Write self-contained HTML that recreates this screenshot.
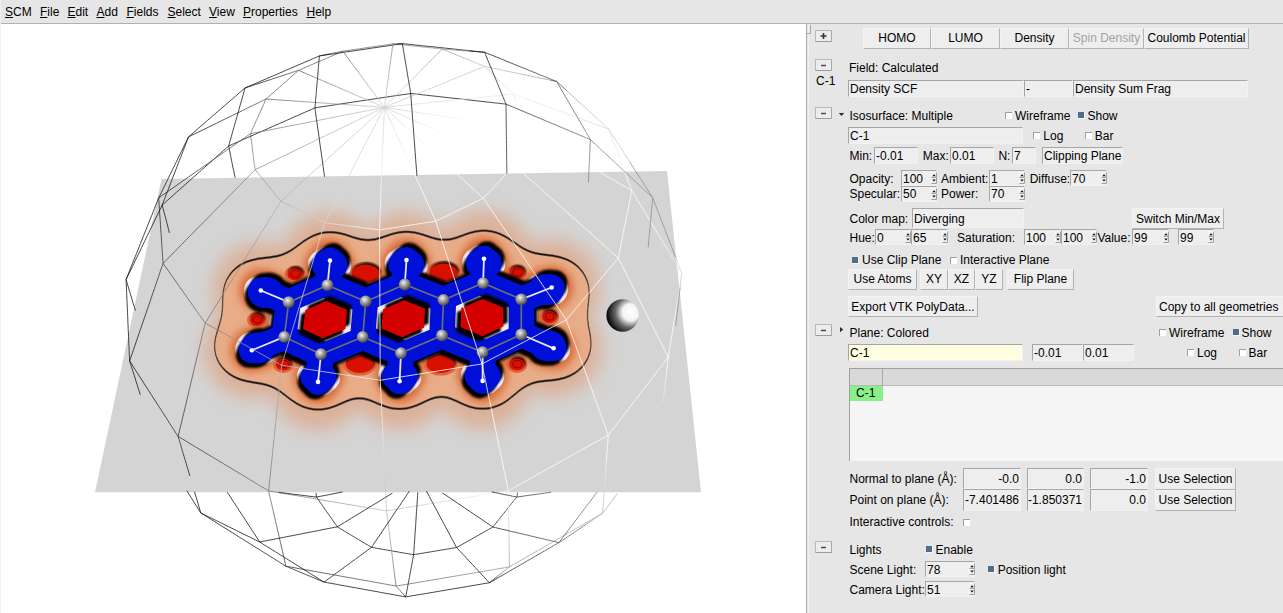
<!DOCTYPE html>
<html><head><meta charset="utf-8"><style>
*{margin:0;padding:0}
body{width:1283px;height:613px;overflow:hidden;background:#fff;position:relative;font-family:"Liberation Sans",sans-serif;font-size:12px;color:#000}
.t{position:absolute;font-size:12px;line-height:14px;white-space:pre}
.b{position:absolute;box-sizing:border-box;background:#eeeeee;border-top:1px solid #f3f3f3;border-left:1px solid #f3f3f3;border-bottom:1px solid #b2b2b2;border-right:1px solid #b2b2b2}
.e{position:absolute;box-sizing:border-box;background:#eeeeee;border-top:1px solid #a6a6a6;border-left:1px solid #a6a6a6;border-bottom:1px solid #f2f2f2;border-right:1px solid #f2f2f2}
.cb{position:absolute;width:7px;height:7px;box-sizing:border-box;background:#fff;border-top:1px solid #a0a0a0;border-left:1px solid #a0a0a0}
.cbk{position:absolute;width:7px;height:7px;box-sizing:border-box;background:#4f6d8c;border-right:1px solid #f6f6f6;border-bottom:1px solid #f6f6f6}
.mb{position:absolute;width:17px;height:12px;box-sizing:border-box;background:#ececec;border:1px solid #b8b8b8;border-bottom-color:#9c9c9c;border-right-color:#a8a8a8;border-radius:1px}
.sp{position:absolute;width:6px;height:11px}
.ar{position:absolute}
#menu{position:absolute;left:0;top:0;width:1283px;height:23px;background:#e6e6e6;border-bottom:1px solid #b0b0b0}
#menu span{position:absolute;top:5px;line-height:14px;font-size:12px}
#menu u{text-decoration:underline;text-underline-offset:1px;text-decoration-thickness:1px}
#panel{position:absolute;left:806px;top:24px;width:477px;height:589px;background:#e6e6e6}
</style></head><body>
<div id="menu"><span style="left:5.0px"><u>S</u>CM</span><span style="left:40.0px"><u>F</u>ile</span><span style="left:67.5px"><u>E</u>dit</span><span style="left:96.5px"><u>A</u>dd</span><span style="left:126.5px"><u>F</u>ields</span><span style="left:167.5px"><u>S</u>elect</span><span style="left:209.0px"><u>V</u>iew</span><span style="left:243.0px"><u>P</u>roperties</span><span style="left:306.5px"><u>H</u>elp</span></div>
<svg style="position:absolute;left:0;top:24px" width="806" height="589" viewBox="0 24 806 589">
<polygon points="161.5,179 667,171 701,492.3 95,492.3" fill="#d4d4d4"/>
<defs><filter id="hb" x="-30%" y="-50%" width="160%" height="200%"><feGaussianBlur stdDeviation="9"/></filter><filter id="mb" x="-30%" y="-50%" width="160%" height="200%"><feGaussianBlur stdDeviation="17.0"/><feComponentTransfer><feFuncA type="linear" slope="30" intercept="-12"/></feComponentTransfer></filter><filter id="b4" x="-20%" y="-20%" width="140%" height="140%"><feGaussianBlur stdDeviation="4"/></filter><filter id="b1" x="-10%" y="-10%" width="120%" height="120%"><feGaussianBlur stdDeviation="1.3"/></filter><filter id="b2" x="-10%" y="-10%" width="120%" height="120%"><feGaussianBlur stdDeviation="0.6"/></filter><radialGradient id="cg" cx="0.4" cy="0.35" r="0.7"><stop offset="0" stop-color="#f2f2f2"/><stop offset="0.45" stop-color="#9a9a9a"/><stop offset="1" stop-color="#3a3a3a"/></radialGradient><radialGradient id="bg" cx="0.75" cy="0.4" r="0.85"><stop offset="0" stop-color="#ffffff"/><stop offset="0.3" stop-color="#f4f4f4"/><stop offset="0.55" stop-color="#6a6a6a"/><stop offset="0.85" stop-color="#0c0c0c"/><stop offset="1" stop-color="#000"/></radialGradient></defs>
<g filter="url(#hb)"><path d="M288.7,302.2L327.5,285.2M327.5,285.2L365.7,301.4M365.7,301.4L362.7,336.9M362.7,336.9L321.0,354.2M321.0,354.2L284.3,336.9M284.3,336.9L288.7,302.2M365.7,301.4L404.8,284.5M404.8,284.5L443.5,299.9M443.5,299.9L442.0,335.4M442.0,335.4L401.0,353.1M401.0,353.1L362.7,336.9M443.5,299.9L483.1,283.1M483.1,283.1L521.3,299.3M521.3,299.3L521.3,334.5M521.3,334.5L482.6,352.2M482.6,352.2L442.0,335.4" stroke="#dcb098" stroke-width="96.0" stroke-linecap="round" stroke-linejoin="round" fill="none"/><path d="M327.5,285.2L330.0,260.5M404.8,284.5L406.5,260.1M483.1,283.1L484.0,258.8M288.7,302.2L260.8,290.5M284.3,336.9L251.8,350.3M321.0,354.2L318.0,381.9M401.0,353.1L399.6,381.2M482.6,352.2L482.6,380.9M521.3,299.3L551.6,287.5M521.3,334.5L553.6,348.3" stroke="#dcb098" stroke-width="96.0" stroke-linecap="round" fill="none"/><ellipse cx="329.2" cy="267.9" rx="52.0" ry="44.7" fill="#dcb098"/><ellipse cx="406.0" cy="267.4" rx="52.0" ry="44.7" fill="#dcb098"/><ellipse cx="483.7" cy="266.1" rx="52.0" ry="44.7" fill="#dcb098"/><ellipse cx="269.2" cy="294.0" rx="52.0" ry="44.7" fill="#dcb098"/><ellipse cx="261.6" cy="346.3" rx="52.0" ry="44.7" fill="#dcb098"/><ellipse cx="318.9" cy="373.6" rx="52.0" ry="44.7" fill="#dcb098"/><ellipse cx="400.0" cy="372.8" rx="52.0" ry="44.7" fill="#dcb098"/><ellipse cx="482.6" cy="372.3" rx="52.0" ry="44.7" fill="#dcb098"/><ellipse cx="542.5" cy="291.0" rx="52.0" ry="44.7" fill="#dcb098"/><ellipse cx="543.9" cy="344.2" rx="52.0" ry="44.7" fill="#dcb098"/></g>
<g transform="translate(0.0,-2.0) translate(403,318) scale(1,0.900) translate(-403,-318)"><g filter="url(#mb)"><path d="M288.7,302.2L327.5,285.2M327.5,285.2L365.7,301.4M365.7,301.4L362.7,336.9M362.7,336.9L321.0,354.2M321.0,354.2L284.3,336.9M284.3,336.9L288.7,302.2M365.7,301.4L404.8,284.5M404.8,284.5L443.5,299.9M443.5,299.9L442.0,335.4M442.0,335.4L401.0,353.1M401.0,353.1L362.7,336.9M443.5,299.9L483.1,283.1M483.1,283.1L521.3,299.3M521.3,299.3L521.3,334.5M521.3,334.5L482.6,352.2M482.6,352.2L442.0,335.4" stroke="#141414" stroke-width="74.0" stroke-linecap="round" stroke-linejoin="round" fill="none"/><path d="M327.5,285.2L330.0,260.5M404.8,284.5L406.5,260.1M483.1,283.1L484.0,258.8M288.7,302.2L260.8,290.5M284.3,336.9L251.8,350.3M321.0,354.2L318.0,381.9M401.0,353.1L399.6,381.2M482.6,352.2L482.6,380.9M521.3,299.3L551.6,287.5M521.3,334.5L553.6,348.3" stroke="#141414" stroke-width="74.0" stroke-linecap="round" fill="none"/><ellipse cx="329.2" cy="267.9" rx="40.0" ry="34.4" fill="#141414"/><ellipse cx="406.0" cy="267.4" rx="40.0" ry="34.4" fill="#141414"/><ellipse cx="483.7" cy="266.1" rx="40.0" ry="34.4" fill="#141414"/><ellipse cx="269.2" cy="294.0" rx="40.0" ry="34.4" fill="#141414"/><ellipse cx="261.6" cy="346.3" rx="40.0" ry="34.4" fill="#141414"/><ellipse cx="318.9" cy="373.6" rx="40.0" ry="34.4" fill="#141414"/><ellipse cx="400.0" cy="372.8" rx="40.0" ry="34.4" fill="#141414"/><ellipse cx="482.6" cy="372.3" rx="40.0" ry="34.4" fill="#141414"/><ellipse cx="542.5" cy="291.0" rx="40.0" ry="34.4" fill="#141414"/><ellipse cx="543.9" cy="344.2" rx="40.0" ry="34.4" fill="#141414"/></g></g><g transform="translate(0.0,2.0) translate(403,318) scale(1,0.900) translate(-403,-318)"><g filter="url(#mb)"><path d="M288.7,302.2L327.5,285.2M327.5,285.2L365.7,301.4M365.7,301.4L362.7,336.9M362.7,336.9L321.0,354.2M321.0,354.2L284.3,336.9M284.3,336.9L288.7,302.2M365.7,301.4L404.8,284.5M404.8,284.5L443.5,299.9M443.5,299.9L442.0,335.4M442.0,335.4L401.0,353.1M401.0,353.1L362.7,336.9M443.5,299.9L483.1,283.1M483.1,283.1L521.3,299.3M521.3,299.3L521.3,334.5M521.3,334.5L482.6,352.2M482.6,352.2L442.0,335.4" stroke="#141414" stroke-width="74.0" stroke-linecap="round" stroke-linejoin="round" fill="none"/><path d="M327.5,285.2L330.0,260.5M404.8,284.5L406.5,260.1M483.1,283.1L484.0,258.8M288.7,302.2L260.8,290.5M284.3,336.9L251.8,350.3M321.0,354.2L318.0,381.9M401.0,353.1L399.6,381.2M482.6,352.2L482.6,380.9M521.3,299.3L551.6,287.5M521.3,334.5L553.6,348.3" stroke="#141414" stroke-width="74.0" stroke-linecap="round" fill="none"/><ellipse cx="329.2" cy="267.9" rx="40.0" ry="34.4" fill="#141414"/><ellipse cx="406.0" cy="267.4" rx="40.0" ry="34.4" fill="#141414"/><ellipse cx="483.7" cy="266.1" rx="40.0" ry="34.4" fill="#141414"/><ellipse cx="269.2" cy="294.0" rx="40.0" ry="34.4" fill="#141414"/><ellipse cx="261.6" cy="346.3" rx="40.0" ry="34.4" fill="#141414"/><ellipse cx="318.9" cy="373.6" rx="40.0" ry="34.4" fill="#141414"/><ellipse cx="400.0" cy="372.8" rx="40.0" ry="34.4" fill="#141414"/><ellipse cx="482.6" cy="372.3" rx="40.0" ry="34.4" fill="#141414"/><ellipse cx="542.5" cy="291.0" rx="40.0" ry="34.4" fill="#141414"/><ellipse cx="543.9" cy="344.2" rx="40.0" ry="34.4" fill="#141414"/></g></g><g transform="translate(-0.8,0.0) translate(403,318) scale(1,0.900) translate(-403,-318)"><g filter="url(#mb)"><path d="M288.7,302.2L327.5,285.2M327.5,285.2L365.7,301.4M365.7,301.4L362.7,336.9M362.7,336.9L321.0,354.2M321.0,354.2L284.3,336.9M284.3,336.9L288.7,302.2M365.7,301.4L404.8,284.5M404.8,284.5L443.5,299.9M443.5,299.9L442.0,335.4M442.0,335.4L401.0,353.1M401.0,353.1L362.7,336.9M443.5,299.9L483.1,283.1M483.1,283.1L521.3,299.3M521.3,299.3L521.3,334.5M521.3,334.5L482.6,352.2M482.6,352.2L442.0,335.4" stroke="#141414" stroke-width="74.0" stroke-linecap="round" stroke-linejoin="round" fill="none"/><path d="M327.5,285.2L330.0,260.5M404.8,284.5L406.5,260.1M483.1,283.1L484.0,258.8M288.7,302.2L260.8,290.5M284.3,336.9L251.8,350.3M321.0,354.2L318.0,381.9M401.0,353.1L399.6,381.2M482.6,352.2L482.6,380.9M521.3,299.3L551.6,287.5M521.3,334.5L553.6,348.3" stroke="#141414" stroke-width="74.0" stroke-linecap="round" fill="none"/><ellipse cx="329.2" cy="267.9" rx="40.0" ry="34.4" fill="#141414"/><ellipse cx="406.0" cy="267.4" rx="40.0" ry="34.4" fill="#141414"/><ellipse cx="483.7" cy="266.1" rx="40.0" ry="34.4" fill="#141414"/><ellipse cx="269.2" cy="294.0" rx="40.0" ry="34.4" fill="#141414"/><ellipse cx="261.6" cy="346.3" rx="40.0" ry="34.4" fill="#141414"/><ellipse cx="318.9" cy="373.6" rx="40.0" ry="34.4" fill="#141414"/><ellipse cx="400.0" cy="372.8" rx="40.0" ry="34.4" fill="#141414"/><ellipse cx="482.6" cy="372.3" rx="40.0" ry="34.4" fill="#141414"/><ellipse cx="542.5" cy="291.0" rx="40.0" ry="34.4" fill="#141414"/><ellipse cx="543.9" cy="344.2" rx="40.0" ry="34.4" fill="#141414"/></g></g><g transform="translate(0.8,0.0) translate(403,318) scale(1,0.900) translate(-403,-318)"><g filter="url(#mb)"><path d="M288.7,302.2L327.5,285.2M327.5,285.2L365.7,301.4M365.7,301.4L362.7,336.9M362.7,336.9L321.0,354.2M321.0,354.2L284.3,336.9M284.3,336.9L288.7,302.2M365.7,301.4L404.8,284.5M404.8,284.5L443.5,299.9M443.5,299.9L442.0,335.4M442.0,335.4L401.0,353.1M401.0,353.1L362.7,336.9M443.5,299.9L483.1,283.1M483.1,283.1L521.3,299.3M521.3,299.3L521.3,334.5M521.3,334.5L482.6,352.2M482.6,352.2L442.0,335.4" stroke="#141414" stroke-width="74.0" stroke-linecap="round" stroke-linejoin="round" fill="none"/><path d="M327.5,285.2L330.0,260.5M404.8,284.5L406.5,260.1M483.1,283.1L484.0,258.8M288.7,302.2L260.8,290.5M284.3,336.9L251.8,350.3M321.0,354.2L318.0,381.9M401.0,353.1L399.6,381.2M482.6,352.2L482.6,380.9M521.3,299.3L551.6,287.5M521.3,334.5L553.6,348.3" stroke="#141414" stroke-width="74.0" stroke-linecap="round" fill="none"/><ellipse cx="329.2" cy="267.9" rx="40.0" ry="34.4" fill="#141414"/><ellipse cx="406.0" cy="267.4" rx="40.0" ry="34.4" fill="#141414"/><ellipse cx="483.7" cy="266.1" rx="40.0" ry="34.4" fill="#141414"/><ellipse cx="269.2" cy="294.0" rx="40.0" ry="34.4" fill="#141414"/><ellipse cx="261.6" cy="346.3" rx="40.0" ry="34.4" fill="#141414"/><ellipse cx="318.9" cy="373.6" rx="40.0" ry="34.4" fill="#141414"/><ellipse cx="400.0" cy="372.8" rx="40.0" ry="34.4" fill="#141414"/><ellipse cx="482.6" cy="372.3" rx="40.0" ry="34.4" fill="#141414"/><ellipse cx="542.5" cy="291.0" rx="40.0" ry="34.4" fill="#141414"/><ellipse cx="543.9" cy="344.2" rx="40.0" ry="34.4" fill="#141414"/></g></g>
<g transform="translate(0.0,0.0) translate(403,318) scale(1,0.900) translate(-403,-318)"><g filter="url(#mb)"><path d="M288.7,302.2L327.5,285.2M327.5,285.2L365.7,301.4M365.7,301.4L362.7,336.9M362.7,336.9L321.0,354.2M321.0,354.2L284.3,336.9M284.3,336.9L288.7,302.2M365.7,301.4L404.8,284.5M404.8,284.5L443.5,299.9M443.5,299.9L442.0,335.4M442.0,335.4L401.0,353.1M401.0,353.1L362.7,336.9M443.5,299.9L483.1,283.1M483.1,283.1L521.3,299.3M521.3,299.3L521.3,334.5M521.3,334.5L482.6,352.2M482.6,352.2L442.0,335.4" stroke="#e8ac88" stroke-width="74.0" stroke-linecap="round" stroke-linejoin="round" fill="none"/><path d="M327.5,285.2L330.0,260.5M404.8,284.5L406.5,260.1M483.1,283.1L484.0,258.8M288.7,302.2L260.8,290.5M284.3,336.9L251.8,350.3M321.0,354.2L318.0,381.9M401.0,353.1L399.6,381.2M482.6,352.2L482.6,380.9M521.3,299.3L551.6,287.5M521.3,334.5L553.6,348.3" stroke="#e8ac88" stroke-width="74.0" stroke-linecap="round" fill="none"/><ellipse cx="329.2" cy="267.9" rx="40.0" ry="34.4" fill="#e8ac88"/><ellipse cx="406.0" cy="267.4" rx="40.0" ry="34.4" fill="#e8ac88"/><ellipse cx="483.7" cy="266.1" rx="40.0" ry="34.4" fill="#e8ac88"/><ellipse cx="269.2" cy="294.0" rx="40.0" ry="34.4" fill="#e8ac88"/><ellipse cx="261.6" cy="346.3" rx="40.0" ry="34.4" fill="#e8ac88"/><ellipse cx="318.9" cy="373.6" rx="40.0" ry="34.4" fill="#e8ac88"/><ellipse cx="400.0" cy="372.8" rx="40.0" ry="34.4" fill="#e8ac88"/><ellipse cx="482.6" cy="372.3" rx="40.0" ry="34.4" fill="#e8ac88"/><ellipse cx="542.5" cy="291.0" rx="40.0" ry="34.4" fill="#e8ac88"/><ellipse cx="543.9" cy="344.2" rx="40.0" ry="34.4" fill="#e8ac88"/></g></g>
<g filter="url(#b4)"><path d="M288.7,302.2L327.5,285.2M327.5,285.2L365.7,301.4M365.7,301.4L362.7,336.9M362.7,336.9L321.0,354.2M321.0,354.2L284.3,336.9M284.3,336.9L288.7,302.2M365.7,301.4L404.8,284.5M404.8,284.5L443.5,299.9M443.5,299.9L442.0,335.4M442.0,335.4L401.0,353.1M401.0,353.1L362.7,336.9M443.5,299.9L483.1,283.1M483.1,283.1L521.3,299.3M521.3,299.3L521.3,334.5M521.3,334.5L482.6,352.2M482.6,352.2L442.0,335.4" stroke="#dc7c48" stroke-width="42.0" stroke-linecap="round" stroke-linejoin="round" fill="none"/><path d="M327.5,285.2L330.0,260.5M404.8,284.5L406.5,260.1M483.1,283.1L484.0,258.8M288.7,302.2L260.8,290.5M284.3,336.9L251.8,350.3M321.0,354.2L318.0,381.9M401.0,353.1L399.6,381.2M482.6,352.2L482.6,380.9M521.3,299.3L551.6,287.5M521.3,334.5L553.6,348.3" stroke="#dc7c48" stroke-width="42.0" stroke-linecap="round" fill="none"/><ellipse cx="329.4" cy="266.7" rx="25.0" ry="21.5" fill="#dc7c48"/><ellipse cx="406.1" cy="266.2" rx="25.0" ry="21.5" fill="#dc7c48"/><ellipse cx="483.8" cy="264.9" rx="25.0" ry="21.5" fill="#dc7c48"/><ellipse cx="267.8" cy="293.4" rx="25.0" ry="21.5" fill="#dc7c48"/><ellipse cx="259.9" cy="346.9" rx="25.0" ry="21.5" fill="#dc7c48"/><ellipse cx="318.8" cy="375.0" rx="25.0" ry="21.5" fill="#dc7c48"/><ellipse cx="400.0" cy="374.2" rx="25.0" ry="21.5" fill="#dc7c48"/><ellipse cx="482.6" cy="373.7" rx="25.0" ry="21.5" fill="#dc7c48"/><ellipse cx="544.0" cy="290.4" rx="25.0" ry="21.5" fill="#dc7c48"/><ellipse cx="545.5" cy="344.9" rx="25.0" ry="21.5" fill="#dc7c48"/></g>
<g filter="url(#b4)"><path d="M288.7,302.2L327.5,285.2M327.5,285.2L365.7,301.4M365.7,301.4L362.7,336.9M362.7,336.9L321.0,354.2M321.0,354.2L284.3,336.9M284.3,336.9L288.7,302.2M365.7,301.4L404.8,284.5M404.8,284.5L443.5,299.9M443.5,299.9L442.0,335.4M442.0,335.4L401.0,353.1M401.0,353.1L362.7,336.9M443.5,299.9L483.1,283.1M483.1,283.1L521.3,299.3M521.3,299.3L521.3,334.5M521.3,334.5L482.6,352.2M482.6,352.2L442.0,335.4" stroke="#da6a38" stroke-width="38.0" stroke-linecap="round" stroke-linejoin="round" fill="none"/><path d="M327.5,285.2L330.0,260.5M404.8,284.5L406.5,260.1M483.1,283.1L484.0,258.8M288.7,302.2L260.8,290.5M284.3,336.9L251.8,350.3M321.0,354.2L318.0,381.9M401.0,353.1L399.6,381.2M482.6,352.2L482.6,380.9M521.3,299.3L551.6,287.5M521.3,334.5L553.6,348.3" stroke="#da6a38" stroke-width="38.0" stroke-linecap="round" fill="none"/><ellipse cx="329.6" cy="264.9" rx="23.0" ry="19.8" fill="#da6a38"/><ellipse cx="406.2" cy="264.5" rx="23.0" ry="19.8" fill="#da6a38"/><ellipse cx="483.8" cy="263.2" rx="23.0" ry="19.8" fill="#da6a38"/><ellipse cx="265.8" cy="292.6" rx="23.0" ry="19.8" fill="#da6a38"/><ellipse cx="257.7" cy="347.9" rx="23.0" ry="19.8" fill="#da6a38"/><ellipse cx="318.5" cy="376.9" rx="23.0" ry="19.8" fill="#da6a38"/><ellipse cx="399.9" cy="376.1" rx="23.0" ry="19.8" fill="#da6a38"/><ellipse cx="482.6" cy="375.7" rx="23.0" ry="19.8" fill="#da6a38"/><ellipse cx="546.1" cy="289.6" rx="23.0" ry="19.8" fill="#da6a38"/><ellipse cx="547.8" cy="345.8" rx="23.0" ry="19.8" fill="#da6a38"/></g>
<ellipse cx="365.6" cy="273.5" rx="17.0" ry="11.5" fill="#e0643a" filter="url(#b2)"/>
<ellipse cx="366.6" cy="271.5" rx="14.0" ry="9.0" fill="#111" filter="url(#b1)"/>
<ellipse cx="365.6" cy="273.5" rx="14.0" ry="9.0" fill="#d81000"/>
<ellipse cx="443.5" cy="272.5" rx="17.0" ry="11.5" fill="#e0643a" filter="url(#b2)"/>
<ellipse cx="444.5" cy="270.5" rx="14.0" ry="9.0" fill="#111" filter="url(#b1)"/>
<ellipse cx="443.5" cy="272.5" rx="14.0" ry="9.0" fill="#d81000"/>
<ellipse cx="359.8" cy="364.0" rx="17.0" ry="11.5" fill="#e0643a" filter="url(#b2)"/>
<ellipse cx="360.8" cy="362.0" rx="14.0" ry="9.0" fill="#111" filter="url(#b1)"/>
<ellipse cx="359.8" cy="364.0" rx="14.0" ry="9.0" fill="#d81000"/>
<ellipse cx="440.6" cy="364.0" rx="17.0" ry="11.5" fill="#e0643a" filter="url(#b2)"/>
<ellipse cx="441.6" cy="362.0" rx="14.0" ry="9.0" fill="#111" filter="url(#b1)"/>
<ellipse cx="440.6" cy="364.0" rx="14.0" ry="9.0" fill="#d81000"/>
<ellipse cx="295.0" cy="274.3" rx="10.5" ry="8.5" fill="#e0643a" filter="url(#b2)"/>
<ellipse cx="296.0" cy="272.3" rx="7.5" ry="6.0" fill="#111" filter="url(#b1)"/>
<ellipse cx="295.0" cy="274.3" rx="7.5" ry="6.0" fill="#d81000"/>
<ellipse cx="295.5" cy="273.8" rx="4.5" ry="3.6" fill="none" stroke="#600" stroke-width="1" opacity="0.7"/>
<ellipse cx="257.0" cy="319.9" rx="10.0" ry="8.5" fill="#e0643a" filter="url(#b2)"/>
<ellipse cx="258.0" cy="317.9" rx="7.0" ry="6.0" fill="#111" filter="url(#b1)"/>
<ellipse cx="257.0" cy="319.9" rx="7.0" ry="6.0" fill="#d81000"/>
<ellipse cx="257.5" cy="319.4" rx="4.2" ry="3.6" fill="none" stroke="#600" stroke-width="1" opacity="0.7"/>
<ellipse cx="283.4" cy="364.5" rx="10.5" ry="8.5" fill="#e0643a" filter="url(#b2)"/>
<ellipse cx="284.4" cy="362.5" rx="7.5" ry="6.0" fill="#111" filter="url(#b1)"/>
<ellipse cx="283.4" cy="364.5" rx="7.5" ry="6.0" fill="#d81000"/>
<ellipse cx="283.9" cy="364.0" rx="4.5" ry="3.6" fill="none" stroke="#600" stroke-width="1" opacity="0.7"/>
<ellipse cx="516.9" cy="272.9" rx="10.5" ry="8.5" fill="#e0643a" filter="url(#b2)"/>
<ellipse cx="517.9" cy="270.9" rx="7.5" ry="6.0" fill="#111" filter="url(#b1)"/>
<ellipse cx="516.9" cy="272.9" rx="7.5" ry="6.0" fill="#d81000"/>
<ellipse cx="517.4" cy="272.4" rx="4.5" ry="3.6" fill="none" stroke="#600" stroke-width="1" opacity="0.7"/>
<ellipse cx="549.2" cy="316.9" rx="10.0" ry="8.5" fill="#e0643a" filter="url(#b2)"/>
<ellipse cx="550.2" cy="314.9" rx="7.0" ry="6.0" fill="#111" filter="url(#b1)"/>
<ellipse cx="549.2" cy="316.9" rx="7.0" ry="6.0" fill="#d81000"/>
<ellipse cx="549.7" cy="316.4" rx="4.2" ry="3.6" fill="none" stroke="#600" stroke-width="1" opacity="0.7"/>
<ellipse cx="516.9" cy="364.5" rx="10.5" ry="8.5" fill="#e0643a" filter="url(#b2)"/>
<ellipse cx="517.9" cy="362.5" rx="7.5" ry="6.0" fill="#111" filter="url(#b1)"/>
<ellipse cx="516.9" cy="364.5" rx="7.5" ry="6.0" fill="#d81000"/>
<ellipse cx="517.4" cy="364.0" rx="4.5" ry="3.6" fill="none" stroke="#600" stroke-width="1" opacity="0.7"/>
<g filter="url(#b2)"><path d="M285.2,301.2L324.0,284.2M324.0,284.2L362.2,300.4M362.2,300.4L359.2,335.9M359.2,335.9L317.5,353.2M317.5,353.2L280.8,335.9M280.8,335.9L285.2,301.2M362.2,300.4L401.3,283.5M401.3,283.5L440.0,298.9M440.0,298.9L438.5,334.4M438.5,334.4L397.5,352.1M397.5,352.1L359.2,335.9M440.0,298.9L479.6,282.1M479.6,282.1L517.8,298.3M517.8,298.3L517.8,333.5M517.8,333.5L479.1,351.2M479.1,351.2L438.5,334.4" stroke="#eee8fa" stroke-width="26.0" stroke-linecap="round" stroke-linejoin="round" fill="none"/><path d="M324.0,284.2L326.5,259.5M401.3,283.5L403.0,259.1M479.6,282.1L480.5,257.8M285.2,301.2L257.3,289.5M280.8,335.9L248.3,349.3M317.5,353.2L314.5,380.9M397.5,352.1L396.1,380.2M479.1,351.2L479.1,379.9M517.8,298.3L548.1,286.5M517.8,333.5L550.1,347.3" stroke="#eee8fa" stroke-width="26.0" stroke-linecap="round" fill="none"/><ellipse cx="326.1" cy="263.9" rx="18.0" ry="15.5" fill="#eee8fa"/><ellipse cx="402.7" cy="263.5" rx="18.0" ry="15.5" fill="#eee8fa"/><ellipse cx="480.3" cy="262.2" rx="18.0" ry="15.5" fill="#eee8fa"/><ellipse cx="262.3" cy="291.6" rx="18.0" ry="15.5" fill="#eee8fa"/><ellipse cx="254.2" cy="346.9" rx="18.0" ry="15.5" fill="#eee8fa"/><ellipse cx="315.0" cy="375.9" rx="18.0" ry="15.5" fill="#eee8fa"/><ellipse cx="396.4" cy="375.1" rx="18.0" ry="15.5" fill="#eee8fa"/><ellipse cx="479.1" cy="374.7" rx="18.0" ry="15.5" fill="#eee8fa"/><ellipse cx="542.6" cy="288.6" rx="18.0" ry="15.5" fill="#eee8fa"/><ellipse cx="544.3" cy="344.8" rx="18.0" ry="15.5" fill="#eee8fa"/><path d="M292.2,303.2L331.0,286.2M331.0,286.2L369.2,302.4M369.2,302.4L366.2,337.9M366.2,337.9L324.5,355.2M324.5,355.2L287.8,337.9M287.8,337.9L292.2,303.2M369.2,302.4L408.3,285.5M408.3,285.5L447.0,300.9M447.0,300.9L445.5,336.4M445.5,336.4L404.5,354.1M404.5,354.1L366.2,337.9M447.0,300.9L486.6,284.1M486.6,284.1L524.8,300.3M524.8,300.3L524.8,335.5M524.8,335.5L486.1,353.2M486.1,353.2L445.5,336.4" stroke="#eee8fa" stroke-width="26.0" stroke-linecap="round" stroke-linejoin="round" fill="none"/><path d="M331.0,286.2L333.5,261.5M408.3,285.5L410.0,261.1M486.6,284.1L487.5,259.8M292.2,303.2L264.3,291.5M287.8,337.9L255.3,351.3M324.5,355.2L321.5,382.9M404.5,354.1L403.1,382.2M486.1,353.2L486.1,381.9M524.8,300.3L555.1,288.5M524.8,335.5L557.1,349.3" stroke="#eee8fa" stroke-width="26.0" stroke-linecap="round" fill="none"/><ellipse cx="333.1" cy="265.9" rx="18.0" ry="15.5" fill="#eee8fa"/><ellipse cx="409.7" cy="265.5" rx="18.0" ry="15.5" fill="#eee8fa"/><ellipse cx="487.3" cy="264.2" rx="18.0" ry="15.5" fill="#eee8fa"/><ellipse cx="269.3" cy="293.6" rx="18.0" ry="15.5" fill="#eee8fa"/><ellipse cx="261.2" cy="348.9" rx="18.0" ry="15.5" fill="#eee8fa"/><ellipse cx="322.0" cy="377.9" rx="18.0" ry="15.5" fill="#eee8fa"/><ellipse cx="403.4" cy="377.1" rx="18.0" ry="15.5" fill="#eee8fa"/><ellipse cx="486.1" cy="376.7" rx="18.0" ry="15.5" fill="#eee8fa"/><ellipse cx="549.6" cy="290.6" rx="18.0" ry="15.5" fill="#eee8fa"/><ellipse cx="551.3" cy="346.8" rx="18.0" ry="15.5" fill="#eee8fa"/></g>
<g filter="url(#b1)"><path d="M291.7,297.7L330.5,280.7M330.5,280.7L368.7,296.9M368.7,296.9L365.7,332.4M365.7,332.4L324.0,349.7M324.0,349.7L287.3,332.4M287.3,332.4L291.7,297.7M368.7,296.9L407.8,280.0M407.8,280.0L446.5,295.4M446.5,295.4L445.0,330.9M445.0,330.9L404.0,348.6M404.0,348.6L365.7,332.4M446.5,295.4L486.1,278.6M486.1,278.6L524.3,294.8M524.3,294.8L524.3,330.0M524.3,330.0L485.6,347.7M485.6,347.7L445.0,330.9" stroke="#000" stroke-width="26.0" stroke-linecap="round" stroke-linejoin="round" fill="none"/><path d="M330.5,280.7L333.0,256.0M407.8,280.0L409.5,255.6M486.1,278.6L487.0,254.3M291.7,297.7L263.8,286.0M287.3,332.4L254.8,345.8M324.0,349.7L321.0,377.4M404.0,348.6L402.6,376.7M485.6,347.7L485.6,376.4M524.3,294.8L554.6,283.0M524.3,330.0L556.6,343.8" stroke="#000" stroke-width="26.0" stroke-linecap="round" fill="none"/><ellipse cx="332.6" cy="260.4" rx="18.0" ry="15.5" fill="#000"/><ellipse cx="409.2" cy="260.0" rx="18.0" ry="15.5" fill="#000"/><ellipse cx="486.8" cy="258.7" rx="18.0" ry="15.5" fill="#000"/><ellipse cx="268.8" cy="288.1" rx="18.0" ry="15.5" fill="#000"/><ellipse cx="260.7" cy="343.4" rx="18.0" ry="15.5" fill="#000"/><ellipse cx="321.5" cy="372.4" rx="18.0" ry="15.5" fill="#000"/><ellipse cx="402.9" cy="371.6" rx="18.0" ry="15.5" fill="#000"/><ellipse cx="485.6" cy="371.2" rx="18.0" ry="15.5" fill="#000"/><ellipse cx="549.1" cy="285.1" rx="18.0" ry="15.5" fill="#000"/><ellipse cx="550.8" cy="341.3" rx="18.0" ry="15.5" fill="#000"/><path d="M285.7,306.7L324.5,289.7M324.5,289.7L362.7,305.9M362.7,305.9L359.7,341.4M359.7,341.4L318.0,358.7M318.0,358.7L281.3,341.4M281.3,341.4L285.7,306.7M362.7,305.9L401.8,289.0M401.8,289.0L440.5,304.4M440.5,304.4L439.0,339.9M439.0,339.9L398.0,357.6M398.0,357.6L359.7,341.4M440.5,304.4L480.1,287.6M480.1,287.6L518.3,303.8M518.3,303.8L518.3,339.0M518.3,339.0L479.6,356.7M479.6,356.7L439.0,339.9" stroke="#000" stroke-width="26.0" stroke-linecap="round" stroke-linejoin="round" fill="none"/><path d="M324.5,289.7L327.0,265.0M401.8,289.0L403.5,264.6M480.1,287.6L481.0,263.3M285.7,306.7L257.8,295.0M281.3,341.4L248.8,354.8M318.0,358.7L315.0,386.4M398.0,357.6L396.6,385.7M479.6,356.7L479.6,385.4M518.3,303.8L548.6,292.0M518.3,339.0L550.6,352.8" stroke="#000" stroke-width="26.0" stroke-linecap="round" fill="none"/><ellipse cx="326.6" cy="269.4" rx="18.0" ry="15.5" fill="#000"/><ellipse cx="403.2" cy="269.0" rx="18.0" ry="15.5" fill="#000"/><ellipse cx="480.8" cy="267.7" rx="18.0" ry="15.5" fill="#000"/><ellipse cx="262.8" cy="297.1" rx="18.0" ry="15.5" fill="#000"/><ellipse cx="254.7" cy="352.4" rx="18.0" ry="15.5" fill="#000"/><ellipse cx="315.5" cy="381.4" rx="18.0" ry="15.5" fill="#000"/><ellipse cx="396.9" cy="380.6" rx="18.0" ry="15.5" fill="#000"/><ellipse cx="479.6" cy="380.2" rx="18.0" ry="15.5" fill="#000"/><ellipse cx="543.1" cy="294.1" rx="18.0" ry="15.5" fill="#000"/><ellipse cx="544.8" cy="350.3" rx="18.0" ry="15.5" fill="#000"/></g>
<path d="M288.7,302.2L327.5,285.2M327.5,285.2L365.7,301.4M365.7,301.4L362.7,336.9M362.7,336.9L321.0,354.2M321.0,354.2L284.3,336.9M284.3,336.9L288.7,302.2M365.7,301.4L404.8,284.5M404.8,284.5L443.5,299.9M443.5,299.9L442.0,335.4M442.0,335.4L401.0,353.1M401.0,353.1L362.7,336.9M443.5,299.9L483.1,283.1M483.1,283.1L521.3,299.3M521.3,299.3L521.3,334.5M521.3,334.5L482.6,352.2M482.6,352.2L442.0,335.4" stroke="#0010d8" stroke-width="26.0" stroke-linecap="round" stroke-linejoin="round" fill="none"/><path d="M327.5,285.2L330.0,260.5M404.8,284.5L406.5,260.1M483.1,283.1L484.0,258.8M288.7,302.2L260.8,290.5M284.3,336.9L251.8,350.3M321.0,354.2L318.0,381.9M401.0,353.1L399.6,381.2M482.6,352.2L482.6,380.9M521.3,299.3L551.6,287.5M521.3,334.5L553.6,348.3" stroke="#0010d8" stroke-width="26.0" stroke-linecap="round" fill="none"/><ellipse cx="329.6" cy="264.9" rx="18.0" ry="15.5" fill="#0010d8"/><ellipse cx="406.2" cy="264.5" rx="18.0" ry="15.5" fill="#0010d8"/><ellipse cx="483.8" cy="263.2" rx="18.0" ry="15.5" fill="#0010d8"/><ellipse cx="265.8" cy="292.6" rx="18.0" ry="15.5" fill="#0010d8"/><ellipse cx="257.7" cy="347.9" rx="18.0" ry="15.5" fill="#0010d8"/><ellipse cx="318.5" cy="376.9" rx="18.0" ry="15.5" fill="#0010d8"/><ellipse cx="399.9" cy="376.1" rx="18.0" ry="15.5" fill="#0010d8"/><ellipse cx="482.6" cy="375.7" rx="18.0" ry="15.5" fill="#0010d8"/><ellipse cx="546.1" cy="289.6" rx="18.0" ry="15.5" fill="#0010d8"/><ellipse cx="547.8" cy="345.8" rx="18.0" ry="15.5" fill="#0010d8"/>
<g filter="url(#b2)"><path d="M300.2,308.1 L323.5,297.9 L346.4,307.6 L344.6,328.9 L319.6,339.3 L297.6,328.9Z" fill="#f2ecf6"/><path d="M377.7,307.3 L401.2,297.1 L424.4,306.4 L423.5,327.7 L398.9,338.3 L375.9,328.6Z" fill="#f2ecf6"/><path d="M456.0,305.9 L479.8,295.8 L502.7,305.5 L502.7,326.7 L479.5,337.3 L455.1,327.2Z" fill="#f2ecf6"/><path d="M306.2,310.1 L329.5,299.9 L352.4,309.6 L350.6,330.9 L325.6,341.3 L303.6,330.9Z" fill="#f2ecf6"/><path d="M383.7,309.3 L407.2,299.1 L430.4,308.4 L429.5,329.7 L404.9,340.3 L381.9,330.6Z" fill="#f2ecf6"/><path d="M462.0,307.9 L485.8,297.8 L508.7,307.5 L508.7,328.7 L485.5,339.3 L461.1,329.2Z" fill="#f2ecf6"/></g>
<g filter="url(#b1)"><path d="M308.2,305.3 L329.9,295.8 L351.3,304.8 L349.6,324.7 L326.3,334.4 L305.7,324.7Z" fill="#000"/><path d="M385.7,304.4 L407.6,295.0 L429.3,303.6 L428.5,323.5 L405.5,333.4 L384.1,324.3Z" fill="#000"/><path d="M464.1,303.1 L486.2,293.7 L507.6,302.8 L507.6,322.5 L486.0,332.4 L463.2,323.0Z" fill="#000"/><path d="M301.2,314.3 L322.9,304.8 L344.3,313.8 L342.6,333.7 L319.3,343.4 L298.7,333.7Z" fill="#000"/><path d="M378.7,313.4 L400.6,304.0 L422.3,312.6 L421.5,332.5 L398.5,342.4 L377.1,333.3Z" fill="#000"/><path d="M457.1,312.1 L479.2,302.7 L500.6,311.8 L500.6,331.5 L479.0,341.4 L456.2,332.0Z" fill="#000"/></g>
<g filter="url(#b2)"><path d="M305.4,310.1 L326.3,301.0 L347.0,309.7 L345.4,328.9 L322.8,338.2 L303.0,328.9Z" fill="#d40000"/><path d="M383.0,309.3 L404.1,300.2 L425.0,308.5 L424.2,327.6 L402.1,337.2 L381.4,328.5Z" fill="#d40000"/><path d="M461.3,307.9 L482.7,298.9 L503.4,307.6 L503.4,326.6 L482.5,336.2 L460.5,327.1Z" fill="#d40000"/></g>
<path d="M288.7,302.2L327.5,285.2M327.5,285.2L365.7,301.4M365.7,301.4L362.7,336.9M362.7,336.9L321.0,354.2M321.0,354.2L284.3,336.9M284.3,336.9L288.7,302.2M365.7,301.4L404.8,284.5M404.8,284.5L443.5,299.9M443.5,299.9L442.0,335.4M442.0,335.4L401.0,353.1M401.0,353.1L362.7,336.9M443.5,299.9L483.1,283.1M483.1,283.1L521.3,299.3M521.3,299.3L521.3,334.5M521.3,334.5L482.6,352.2M482.6,352.2L442.0,335.4" stroke="#707070" stroke-width="1.6" fill="none"/>
<line x1="327.5" y1="285.2" x2="330.0" y2="260.5" stroke="#e6e6e6" stroke-width="1.8"/>
<line x1="404.8" y1="284.5" x2="406.5" y2="260.1" stroke="#e6e6e6" stroke-width="1.8"/>
<line x1="483.1" y1="283.1" x2="484.0" y2="258.8" stroke="#e6e6e6" stroke-width="1.8"/>
<line x1="288.7" y1="302.2" x2="260.8" y2="290.5" stroke="#e6e6e6" stroke-width="1.8"/>
<line x1="284.3" y1="336.9" x2="251.8" y2="350.3" stroke="#e6e6e6" stroke-width="1.8"/>
<line x1="321.0" y1="354.2" x2="318.0" y2="381.9" stroke="#e6e6e6" stroke-width="1.8"/>
<line x1="401.0" y1="353.1" x2="399.6" y2="381.2" stroke="#e6e6e6" stroke-width="1.8"/>
<line x1="482.6" y1="352.2" x2="482.6" y2="380.9" stroke="#e6e6e6" stroke-width="1.8"/>
<line x1="521.3" y1="299.3" x2="551.6" y2="287.5" stroke="#e6e6e6" stroke-width="1.8"/>
<line x1="521.3" y1="334.5" x2="553.6" y2="348.3" stroke="#e6e6e6" stroke-width="1.8"/>
<circle cx="327.5" cy="285.2" r="5.9" fill="url(#cg)"/>
<circle cx="404.8" cy="284.5" r="5.9" fill="url(#cg)"/>
<circle cx="483.1" cy="283.1" r="5.9" fill="url(#cg)"/>
<circle cx="288.7" cy="302.2" r="5.9" fill="url(#cg)"/>
<circle cx="365.7" cy="301.4" r="5.9" fill="url(#cg)"/>
<circle cx="443.5" cy="299.9" r="5.9" fill="url(#cg)"/>
<circle cx="521.3" cy="299.3" r="5.9" fill="url(#cg)"/>
<circle cx="284.3" cy="336.9" r="5.9" fill="url(#cg)"/>
<circle cx="362.7" cy="336.9" r="5.9" fill="url(#cg)"/>
<circle cx="442.0" cy="335.4" r="5.9" fill="url(#cg)"/>
<circle cx="521.3" cy="334.5" r="5.9" fill="url(#cg)"/>
<circle cx="321.0" cy="354.2" r="5.9" fill="url(#cg)"/>
<circle cx="401.0" cy="353.1" r="5.9" fill="url(#cg)"/>
<circle cx="482.6" cy="352.2" r="5.9" fill="url(#cg)"/>
<circle cx="330.0" cy="260.5" r="2.3" fill="#fff"/>
<circle cx="406.5" cy="260.1" r="2.3" fill="#fff"/>
<circle cx="484.0" cy="258.8" r="2.3" fill="#fff"/>
<circle cx="260.8" cy="290.5" r="2.3" fill="#fff"/>
<circle cx="251.8" cy="350.3" r="2.3" fill="#fff"/>
<circle cx="318.0" cy="381.9" r="2.3" fill="#fff"/>
<circle cx="399.6" cy="381.2" r="2.3" fill="#fff"/>
<circle cx="482.6" cy="380.9" r="2.3" fill="#fff"/>
<circle cx="551.6" cy="287.5" r="2.3" fill="#fff"/>
<circle cx="553.6" cy="348.3" r="2.3" fill="#fff"/>
<circle cx="622.6" cy="315.5" r="16.2" fill="url(#bg)"/>
<g fill="none" stroke-width="0.8"><polyline points="435.7,221.2 437.8,220.2 439.8,219.2 441.8,218.3 443.8,217.3 445.8,216.4 447.8,215.4 449.8,214.4 451.8,213.5 453.7,212.5 455.7,211.5 457.7,210.6 459.7,209.6 461.7,208.7 463.7,207.7 465.7,206.8 467.6,205.8 469.6,204.8 471.6,203.9 473.6,202.9 475.5,202.0 477.5,201.0 479.5,200.1 481.4,199.1 483.4,198.2" stroke="#ffffff"/>
<polyline points="483.4,198.2 484.7,196.8 486.0,195.4 487.3,194.0 488.7,192.6 490.0,191.3 491.3,189.9 492.6,188.5 493.9,187.1 495.2,185.7 496.5,184.4 497.8,183.0 499.1,181.6 500.4,180.3 501.7,178.9 502.9,177.5 504.2,176.2 505.5,174.8 506.8,173.5 508.1,172.1 509.4,170.8 510.6,169.4 511.9,168.1 513.2,166.7 514.4,165.4" stroke="#ffffff"/>
<polyline points="514.4,165.4 514.9,163.8 515.3,162.3 515.7,160.7 516.2,159.2 516.6,157.6 517.0,156.1 517.5,154.5 517.9,153.0 518.3,151.4 518.7,149.9 519.2,148.4 519.6,146.8 520.0,145.3 520.4,143.8 520.9,142.3 521.3,140.7 521.7,139.2 522.1,137.7 522.5,136.2 522.9,134.7 523.4,133.2 523.8,131.7 524.2,130.2 524.6,128.7" stroke="#ffffff"/>
<polyline points="524.6,128.7 524.1,127.2 523.7,125.8 523.2,124.3 522.7,122.8 522.3,121.4 521.8,119.9 521.4,118.4 520.9,117.0 520.4,115.5 520.0,114.1 519.5,112.6 519.1,111.2 518.6,109.7" stroke="#ffffff"/>
<polyline points="518.6,109.7 518.2,108.3 517.7,106.9 517.2,105.4 516.8,104.0 516.3,102.6 515.9,101.1" stroke="#f8f8f8"/>
<polyline points="515.9,101.1 515.4,99.7 515.0,98.3 514.5,96.9 514.1,95.5 513.6,94.1" stroke="#f0f0f0"/>
<polyline points="513.6,94.1 512.4,92.9 511.2,91.7 509.9,90.5 508.7,89.4 507.5,88.2" stroke="#e8e8e8"/>
<polyline points="507.5,88.2 506.3,87.0 505.0,85.9 503.8,84.7 502.6,83.6 501.4,82.4" stroke="#e0e0e0"/>
<polyline points="501.4,82.4 500.1,81.2 498.9,80.1 497.7,78.9 496.5,77.8 495.3,76.6" stroke="#d8d8d8"/>
<polyline points="495.3,76.6 494.1,75.5 492.9,74.3 491.7,73.2 490.5,72.1 489.3,70.9" stroke="#d0d0d0"/>
<polyline points="489.3,70.9 488.1,69.8 486.9,68.6 485.7,67.5 484.5,66.4" stroke="#c8c8c8"/>
<polyline points="484.5,66.4 482.7,65.6" stroke="#c8c8c8"/>
<polyline points="482.7,65.6 481.0,64.9 479.2,64.2 477.4,63.5 475.6,62.7 473.8,62.0" stroke="#c0c0c0"/>
<polyline points="473.8,62.0 472.1,61.3 470.3,60.5 468.5,59.8 466.8,59.1 465.0,58.4" stroke="#b8b8b8"/>
<polyline points="465.0,58.4 463.2,57.6 461.5,56.9 459.7,56.2 458.0,55.5 456.2,54.8" stroke="#b0b0b0"/>
<polyline points="456.2,54.8 454.5,54.0 452.7,53.3 451.0,52.6 449.2,51.9 447.5,51.2" stroke="#a8a8a8"/>
<polyline points="447.5,51.2 445.7,50.4 444.0,49.7 442.3,49.0" stroke="#a0a0a0"/>
<polyline points="442.3,49.0 440.2,48.8 438.1,48.6 436.0,48.4" stroke="#a0a0a0"/>
<polyline points="436.0,48.4 434.0,48.2 431.9,47.9 429.8,47.7 427.8,47.5 425.7,47.3 423.7,47.1" stroke="#989898"/>
<polyline points="423.7,47.1 421.6,46.9 419.5,46.6 417.5,46.4 415.4,46.2 413.4,46.0 411.3,45.8" stroke="#909090"/>
<polyline points="411.3,45.8 409.3,45.6 407.2,45.3 405.2,45.1 403.1,44.9 401.1,44.7 399.0,44.5" stroke="#888888"/>
<polyline points="399.0,44.5 397.0,44.3 394.9,44.0 392.9,43.8" stroke="#808080"/>
<polyline points="392.9,43.8 390.8,44.1 388.7,44.5 386.6,44.8 384.6,45.1 382.5,45.4" stroke="#808080"/>
<polyline points="382.5,45.4 380.4,45.7 378.3,46.0 376.2,46.3 374.2,46.6 372.1,46.9 370.0,47.2 367.9,47.5 365.8,47.8 363.7,48.2 361.6,48.5" stroke="#787878"/>
<polyline points="361.6,48.5 359.6,48.8 357.5,49.1 355.4,49.4 353.3,49.7 351.2,50.0 349.1,50.3 347.0,50.6 345.0,50.9 342.9,51.2" stroke="#707070"/>
<polyline points="342.9,51.2 341.0,52.0 339.2,52.8 337.4,53.6 335.5,54.4 333.7,55.2 331.9,56.0 330.0,56.8 328.2,57.6 326.4,58.4 324.5,59.2 322.7,60.0 320.8,60.8 319.0,61.5 317.1,62.3 315.3,63.1 313.4,63.9 311.6,64.7 309.7,65.5 307.9,66.3 306.0,67.1 304.2,67.9" stroke="#686868"/>
<polyline points="304.2,67.9 302.3,68.8 300.4,69.6 298.6,70.4" stroke="#606060"/>
<polyline points="298.6,70.4 297.2,71.5 295.9,72.7 294.6,73.9 293.2,75.1 291.9,76.3 290.5,77.4 289.2,78.6 287.8,79.8 286.5,81.0" stroke="#606060"/>
<polyline points="286.5,81.0 285.2,82.2 283.8,83.4 282.4,84.6 281.1,85.8 279.7,87.0 278.4,88.2 277.0,89.4 275.6,90.6 274.3,91.8 272.9,93.0 271.5,94.2 270.2,95.4 268.8,96.6 267.4,97.8 266.0,99.0" stroke="#686868"/>
<polyline points="266.0,99.0 265.4,100.4 264.8,101.9 264.1,103.3 263.5,104.7 262.8,106.1 262.2,107.6 261.5,109.0 260.9,110.4 260.3,111.9 259.6,113.3" stroke="#686868"/>
<polyline points="259.6,113.3 259.0,114.7 258.3,116.2 257.7,117.6 257.0,119.1 256.3,120.5 255.7,122.0 255.0,123.4 254.4,124.9 253.7,126.4 253.1,127.8 252.4,129.3 251.7,130.8 251.1,132.2" stroke="#707070"/>
<polyline points="251.1,132.2 250.4,133.7" stroke="#787878"/>
<polyline points="250.4,133.7 250.6,135.2 250.8,136.7 251.0,138.1 251.2,139.6 251.4,141.1 251.6,142.6" stroke="#787878"/>
<polyline points="251.6,142.6 251.8,144.0 252.0,145.5 252.2,147.0 252.3,148.5 252.5,150.0 252.7,151.5 252.9,153.0 253.1,154.5" stroke="#808080"/>
<polyline points="253.1,154.5 253.3,156.0 253.5,157.5 253.7,159.0 253.9,160.5 254.1,162.0 254.3,163.6 254.5,165.1" stroke="#888888"/>
<polyline points="254.5,165.1 254.7,166.6 254.9,168.1 255.1,169.7" stroke="#909090"/>
<polyline points="255.1,169.7 256.2,171.0 257.2,172.3 258.3,173.5" stroke="#909090"/>
<polyline points="258.3,173.5 259.3,174.8 260.4,176.1 261.5,177.4 262.5,178.7 263.6,180.0 264.7,181.3" stroke="#989898"/>
<polyline points="264.7,181.3 265.7,182.7 266.8,184.0 267.9,185.3 268.9,186.6 270.0,187.9" stroke="#a0a0a0"/>
<polyline points="270.0,187.9 271.1,189.2 272.2,190.6 273.3,191.9 274.3,193.2 275.4,194.5 276.5,195.9" stroke="#a8a8a8"/>
<polyline points="276.5,195.9 277.6,197.2 278.7,198.5 279.8,199.9 280.9,201.2" stroke="#b0b0b0"/>
<polyline points="280.9,201.2 282.7,202.1" stroke="#b0b0b0"/>
<polyline points="282.7,202.1 284.5,203.0 286.3,203.9 288.1,204.8 289.9,205.6 291.7,206.5" stroke="#b8b8b8"/>
<polyline points="291.7,206.5 293.5,207.4 295.3,208.3 297.1,209.2 298.9,210.1 300.8,211.0" stroke="#c0c0c0"/>
<polyline points="300.8,211.0 302.6,211.9 304.4,212.8 306.2,213.7 308.1,214.6 309.9,215.5" stroke="#c8c8c8"/>
<polyline points="309.9,215.5 311.7,216.4 313.6,217.3 315.4,218.2 317.2,219.1 319.1,220.0" stroke="#d0d0d0"/>
<polyline points="319.1,220.0 320.9,220.9 322.8,221.8 324.6,222.7" stroke="#d8d8d8"/>
<polyline points="324.6,222.7 326.9,223.0 329.2,223.3" stroke="#d8d8d8"/>
<polyline points="329.2,223.3 331.4,223.6 333.7,223.9 336.0,224.2 338.2,224.5 340.5,224.8" stroke="#e0e0e0"/>
<polyline points="340.5,224.8 342.8,225.1 345.1,225.4 347.4,225.7 349.6,226.0 351.9,226.3" stroke="#e8e8e8"/>
<polyline points="351.9,226.3 354.2,226.6 356.5,226.9 358.8,227.2 361.1,227.5 363.4,227.8" stroke="#f0f0f0"/>
<polyline points="363.4,227.8 365.7,228.1 368.0,228.4 370.3,228.7 372.6,229.0 374.9,229.3 377.2,229.6" stroke="#f8f8f8"/>
<polyline points="377.2,229.6 379.5,229.9" stroke="#ffffff"/>
<polyline points="379.5,229.9 381.8,229.5 384.2,229.2 386.5,228.8 388.9,228.5 391.2,228.1 393.5,227.7 395.9,227.4 398.2,227.0 400.6,226.6 402.9,226.3 405.3,225.9 407.6,225.5 410.0,225.2 412.3,224.8 414.7,224.5 417.0,224.1 419.3,223.7 421.7,223.4 424.0,223.0 426.4,222.6 428.7,222.3 431.1,221.9 433.4,221.5 435.7,221.2" stroke="#ffffff"/>
<polyline points="481.9,363.9 485.5,362.1 489.1,360.2 492.7,358.3 496.2,356.5 499.8,354.6 503.4,352.7 506.9,350.9 510.4,349.0 514.0,347.2 517.5,345.3 521.0,343.5 524.6,341.7 528.1,339.8 531.6,338.0 535.1,336.2 538.6,334.3 542.0,332.5 545.5,330.7 549.0,328.9 552.5,327.1 555.9,325.3 559.4,323.5 562.8,321.7 566.3,319.8" stroke="#ffffff"/>
<polyline points="566.3,319.8 568.5,317.2 570.8,314.5 573.0,311.9 575.2,309.2 577.4,306.6 579.6,304.0 581.8,301.4 584.0,298.8 586.2,296.2 588.4,293.6 590.6,291.0 592.7,288.4 594.9,285.8 597.0,283.3 599.2,280.7 601.3,278.1 603.5,275.6 605.6,273.1 607.7,270.5 609.9,268.0 612.0,265.5 614.1,263.0 616.2,260.5 618.3,258.0" stroke="#ffffff"/>
<polyline points="618.3,258.0 618.9,255.1 619.5,252.2 620.0,249.3 620.6,246.4 621.2,243.5 621.8,240.6 622.3,237.8 622.9,234.9 623.5,232.1 624.0,229.3 624.6,226.5 625.2,223.7 625.7,220.9 626.3,218.1 626.9,215.3 627.4,212.5 628.0,209.8 628.5,207.0 629.1,204.3 629.6,201.6 630.2,198.8 630.7,196.1 631.2,193.4 631.8,190.7" stroke="#ffffff"/>
<polyline points="631.8,190.7 630.8,188.1 629.8,185.4 628.8,182.8 627.8,180.1 626.9,177.5 625.9,174.9 624.9,172.3 623.9,169.7 623.0,167.1 622.0,164.5" stroke="#ffffff"/>
<polyline points="622.0,164.5 621.0,161.9 620.1,159.3 619.1,156.8" stroke="#f8f8f8"/>
<polyline points="619.1,156.8 618.2,154.2 617.2,151.7 616.3,149.2" stroke="#f0f0f0"/>
<polyline points="616.3,149.2 615.3,146.6 614.4,144.1 613.5,141.6" stroke="#e8e8e8"/>
<polyline points="613.5,141.6 612.5,139.1 611.6,136.6 610.7,134.2" stroke="#e0e0e0"/>
<polyline points="610.7,134.2 609.8,131.7 608.8,129.2" stroke="#d8d8d8"/>
<polyline points="608.8,129.2 606.6,127.2" stroke="#d8d8d8"/>
<polyline points="606.6,127.2 604.4,125.1 602.1,123.1 599.9,121.0 597.7,119.0" stroke="#d0d0d0"/>
<polyline points="597.7,119.0 595.5,117.0 593.2,115.0 591.0,112.9" stroke="#c8c8c8"/>
<polyline points="591.0,112.9 588.8,110.9 586.7,108.9" stroke="#c0c0c0"/>
<polyline points="586.7,108.9 584.5,106.9 582.3,104.9 580.1,103.0" stroke="#b8b8b8"/>
<polyline points="580.1,103.0 578.0,101.0 575.8,99.0 573.7,97.0" stroke="#b0b0b0"/>
<polyline points="573.7,97.0 571.5,95.1 569.4,93.1 567.2,91.2" stroke="#a8a8a8"/>
<polyline points="567.2,91.2 565.1,89.2 563.0,87.3 560.9,85.4 558.8,83.4" stroke="#585858"/>
<polyline points="558.8,83.4 556.7,81.5" stroke="#505050"/>
<polyline points="556.7,81.5 553.6,80.3 550.5,79.0" stroke="#505050"/>
<polyline points="550.5,79.0 547.5,77.8 544.4,76.5 541.3,75.3 538.3,74.1" stroke="#484848"/>
<polyline points="538.3,74.1 535.3,72.8 532.2,71.6 529.2,70.4" stroke="#404040"/>
<polyline points="529.2,70.4 526.2,69.1 523.2,67.9 520.2,66.7 517.2,65.5" stroke="#383838"/>
<polyline points="517.2,65.5 514.2,64.3 511.2,63.1 508.2,61.9" stroke="#303030"/>
<polyline points="508.2,61.9 505.2,60.6 502.3,59.4 499.3,58.2" stroke="#282828"/>
<polyline points="499.3,58.2 496.4,57.0 493.4,55.8 490.5,54.6" stroke="#202020"/>
<polyline points="490.5,54.6 487.5,53.5 484.6,52.3" stroke="#181818"/>
<polyline points="484.6,52.3 481.1,51.9 477.7,51.5 474.2,51.2 470.8,50.8 467.3,50.4 463.9,50.1 460.4,49.7 457.0,49.4 453.5,49.0 450.1,48.6 446.7,48.3 443.2,47.9 439.8,47.6 436.4,47.2 433.0,46.8 429.6,46.5 426.2,46.1 422.7,45.8 419.3,45.4 415.9,45.1 412.5,44.7 409.1,44.3 405.8,44.0 402.4,43.6" stroke="#181818"/>
<polyline points="402.4,43.6 398.9,44.1 395.5,44.7 392.0,45.2 388.6,45.7 385.1,46.2 381.7,46.7 378.2,47.2 374.8,47.7 371.3,48.2 367.9,48.7 364.4,49.3 361.0,49.8 357.5,50.3 354.1,50.8 350.6,51.3 347.1,51.8 343.7,52.3 340.2,52.8 336.8,53.4 333.3,53.9 329.8,54.4 326.4,54.9 322.9,55.4 319.4,55.9" stroke="#181818"/>
<polyline points="319.4,55.9 316.4,57.2 313.3,58.5 310.3,59.9 307.2,61.2 304.2,62.5 301.1,63.8 298.0,65.1 294.9,66.5 291.9,67.8 288.8,69.1 285.7,70.4 282.6,71.8 279.5,73.1 276.4,74.5 273.3,75.8 270.2,77.1 267.0,78.5 263.9,79.8 260.8,81.2 257.7,82.5 254.5,83.9 251.4,85.2 248.2,86.6 245.1,87.9" stroke="#181818"/>
<polyline points="245.1,87.9 242.8,89.9 240.5,91.9 238.2,93.9 235.9,95.9 233.6,97.9 231.2,99.9 228.9,101.9 226.6,103.9 224.3,105.9 221.9,108.0 219.6,110.0 217.2,112.0 214.8,114.1 212.5,116.1 210.1,118.2 207.7,120.2 205.4,122.3 203.0,124.4 200.6,126.4 198.2,128.5 195.8,130.6 193.4,132.7 190.9,134.8 188.5,136.9" stroke="#181818"/>
<polyline points="188.5,136.9 187.3,139.3 186.1,141.8 184.9,144.3 183.7,146.7 182.5,149.2 181.3,151.7 180.0,154.2 178.8,156.7 177.6,159.2 176.4,161.7" stroke="#181818"/>
<polyline points="176.4,161.7 175.1,164.3 173.9,166.8 172.6,169.4 171.4,171.9 170.1,174.5 168.9,177.0 167.6,179.6 166.4,182.2 165.1,184.8 163.8,187.4 162.5,190.0 161.3,192.6 160.0,195.3 158.7,197.9" stroke="#202020"/>
<polyline points="158.7,197.9 158.9,200.5 159.0,203.2 159.2,205.8 159.4,208.4 159.6,211.1 159.7,213.8 159.9,216.4" stroke="#282828"/>
<polyline points="159.9,216.4 160.1,219.1 160.3,221.8 160.5,224.5 160.6,227.2 160.8,230.0 161.0,232.7" stroke="#303030"/>
<polyline points="161.0,232.7 161.2,235.4 161.4,238.2 161.6,241.0 161.8,243.7 161.9,246.5 162.1,249.3" stroke="#383838"/>
<polyline points="162.1,249.3 162.3,252.1 162.5,254.9 162.7,257.7 162.9,260.6 163.1,263.4" stroke="#404040"/>
<polyline points="163.1,263.4 164.8,265.8 166.5,268.2 168.2,270.6 169.9,273.0" stroke="#484848"/>
<polyline points="169.9,273.0 171.6,275.5 173.3,277.9 175.0,280.3 176.8,282.8" stroke="#505050"/>
<polyline points="176.8,282.8 178.5,285.2 180.2,287.7 182.0,290.2 183.7,292.7" stroke="#585858"/>
<polyline points="183.7,292.7 185.5,295.1 187.2,297.6 189.0,300.2 190.8,302.7" stroke="#606060"/>
<polyline points="190.8,302.7 192.6,305.2 194.4,307.7 196.1,310.3" stroke="#686868"/>
<polyline points="196.1,310.3 197.9,312.8 199.8,315.4 201.6,317.9 203.4,320.5" stroke="#707070"/>
<polyline points="203.4,320.5 205.2,323.1" stroke="#787878"/>
<polyline points="205.2,323.1 208.3,324.8 211.4,326.5" stroke="#787878"/>
<polyline points="211.4,326.5 214.5,328.2 217.6,329.9 220.8,331.7" stroke="#808080"/>
<polyline points="220.8,331.7 223.9,333.4 227.0,335.1 230.2,336.9" stroke="#888888"/>
<polyline points="230.2,336.9 233.4,338.6 236.5,340.4 239.7,342.1" stroke="#909090"/>
<polyline points="239.7,342.1 242.9,343.9 246.1,345.6 249.3,347.4" stroke="#989898"/>
<polyline points="249.3,347.4 252.5,349.2 255.7,350.9 258.9,352.7" stroke="#a0a0a0"/>
<polyline points="258.9,352.7 262.1,354.5 265.4,356.3 268.6,358.1" stroke="#a8a8a8"/>
<polyline points="268.6,358.1 271.8,359.9 275.1,361.7 278.4,363.5" stroke="#b0b0b0"/>
<polyline points="278.4,363.5 281.6,365.3" stroke="#b8b8b8"/>
<polyline points="281.6,365.3 285.7,365.9 289.8,366.5" stroke="#b8b8b8"/>
<polyline points="289.8,366.5 293.8,367.1 297.9,367.8 302.0,368.4" stroke="#c0c0c0"/>
<polyline points="302.0,368.4 306.0,369.0 310.1,369.6" stroke="#c8c8c8"/>
<polyline points="310.1,369.6 314.2,370.2 318.3,370.9 322.4,371.5" stroke="#d0d0d0"/>
<polyline points="322.4,371.5 326.5,372.1 330.6,372.7 334.7,373.4" stroke="#d8d8d8"/>
<polyline points="334.7,373.4 338.8,374.0 343.0,374.6 347.1,375.2" stroke="#e0e0e0"/>
<polyline points="347.1,375.2 351.2,375.9 355.4,376.5 359.5,377.1" stroke="#e8e8e8"/>
<polyline points="359.5,377.1 363.6,377.8 367.8,378.4 371.9,379.0 376.1,379.6" stroke="#f0f0f0"/>
<polyline points="376.1,379.6 380.3,380.3" stroke="#f8f8f8"/>
<polyline points="380.3,380.3 384.5,379.6 388.8,378.9" stroke="#f8f8f8"/>
<polyline points="388.8,378.9 393.0,378.2 397.3,377.5 401.5,376.9 405.8,376.2 410.0,375.5 414.2,374.8 418.5,374.1 422.7,373.5 427.0,372.8 431.2,372.1 435.4,371.4 439.7,370.7 443.9,370.0 448.1,369.4 452.4,368.7 456.6,368.0 460.8,367.3 465.0,366.6 469.3,366.0 473.5,365.3 477.7,364.6 481.9,363.9" stroke="#ffffff"/>
<polyline points="508.3,490.8 512.6,488.4 516.9,486.0" stroke="#f8f8f8"/>
<polyline points="516.9,486.0 521.1,483.6 525.3,481.3 529.6,478.9 533.8,476.6 538.0,474.2 542.2,471.9 546.4,469.5 550.6,467.2 554.8,464.9 558.9,462.6 563.1,460.2 567.3,457.9 571.4,455.6 575.5,453.3 579.7,451.0 583.8,448.7 587.9,446.4 592.0,444.1 596.1,441.9 600.2,439.6 604.2,437.3 608.3,435.1" stroke="#ffffff"/>
<polyline points="608.3,435.1 610.9,431.7 613.5,428.3 616.1,425.0 618.6,421.6 621.2,418.3 623.8,415.0 626.3,411.7 628.8,408.4 631.4,405.1 633.9,401.9 636.4,398.6 638.9,395.3 641.4,392.1 643.9,388.9 646.4,385.7 648.8,382.5 651.3,379.3 653.7,376.1 656.2,372.9 658.6,369.7 661.1,366.6 663.5,363.4 665.9,360.3 668.3,357.2" stroke="#ffffff"/>
<polyline points="668.3,357.2 668.9,353.5 669.5,349.9 670.1,346.3 670.7,342.7 671.2,339.1 671.8,335.5 672.4,331.9 673.0,328.4 673.5,324.8 674.1,321.3" stroke="#ffffff"/>
<polyline points="674.1,321.3 674.7,317.8 675.2,314.3 675.8,310.8 676.4,307.4" stroke="#f8f8f8"/>
<polyline points="676.4,307.4 676.9,303.9 677.5,300.5 678.0,297.0 678.6,293.6" stroke="#f0f0f0"/>
<polyline points="678.6,293.6 679.1,290.2 679.7,286.8 680.2,283.5" stroke="#e8e8e8"/>
<polyline points="680.2,283.5 680.8,280.1 681.3,276.8 681.9,273.4" stroke="#e0e0e0"/>
<polyline points="681.9,273.4 680.6,270.1" stroke="#e0e0e0"/>
<polyline points="680.6,270.1 679.3,266.8 678.1,263.6 676.8,260.3" stroke="#d8d8d8"/>
<polyline points="676.8,260.3 675.6,257.1" stroke="#d0d0d0"/>
<polyline points="675.6,257.1 674.3,253.8 673.1,250.6 671.8,247.4 670.6,244.2 669.4,241.0 668.2,237.8 666.9,234.7 665.7,231.5 664.5,228.4 663.3,225.3 662.1,222.2 660.9,219.1 659.7,216.0 658.6,212.9 657.4,209.9 656.2,206.8 655.0,203.8 653.9,200.7 652.7,197.7" stroke="#909090"/>
<polyline points="652.7,197.7 650.0,195.2 647.3,192.7 644.6,190.2 642.0,187.7 639.3,185.2 636.6,182.7 634.0,180.3 631.4,177.8 628.7,175.4 626.1,172.9 623.5,170.5 620.9,168.1 618.3,165.6 615.7,163.2 613.1,160.8 610.6,158.4" stroke="#909090"/>
<polyline points="610.6,158.4 608.0,156.0 605.5,153.7 602.9,151.3 600.4,148.9" stroke="#888888"/>
<polyline points="600.4,148.9 597.9,146.6 595.4,144.2 592.8,141.9" stroke="#808080"/>
<polyline points="592.8,141.9 590.3,139.6" stroke="#787878"/>
<polyline points="590.3,139.6 586.7,138.0 583.1,136.5" stroke="#787878"/>
<polyline points="583.1,136.5 579.5,135.0 576.0,133.5 572.4,132.0" stroke="#707070"/>
<polyline points="572.4,132.0 568.8,130.5 565.2,129.0 561.7,127.5" stroke="#686868"/>
<polyline points="561.7,127.5 558.2,126.0 554.6,124.5" stroke="#606060"/>
<polyline points="554.6,124.5 551.1,123.1 547.6,121.6 544.1,120.1" stroke="#585858"/>
<polyline points="544.1,120.1 540.6,118.6 537.1,117.2 533.6,115.7" stroke="#505050"/>
<polyline points="533.6,115.7 530.1,114.2 526.6,112.8" stroke="#484848"/>
<polyline points="526.6,112.8 523.2,111.3 519.7,109.9" stroke="#404040"/>
<polyline points="519.7,109.9 516.3,108.4 512.8,107.0 509.4,105.5" stroke="#383838"/>
<polyline points="509.4,105.5 506.0,104.1" stroke="#303030"/>
<polyline points="506.0,104.1 502.0,103.7" stroke="#303030"/>
<polyline points="502.0,103.7 498.0,103.2 494.0,102.8" stroke="#282828"/>
<polyline points="494.0,102.8 489.9,102.3 485.9,101.9 481.9,101.4" stroke="#202020"/>
<polyline points="481.9,101.4 478.0,101.0 474.0,100.5 470.0,100.1 466.0,99.6 462.0,99.2 458.1,98.7 454.1,98.3 450.1,97.9 446.2,97.4 442.2,97.0 438.3,96.5 434.3,96.1 430.4,95.7 426.4,95.2 422.5,94.8 418.6,94.3 414.7,93.9 410.7,93.5" stroke="#181818"/>
<polyline points="410.7,93.5 406.8,94.1 402.8,94.7 398.8,95.2 394.8,95.8 390.8,96.4 386.8,97.0 382.9,97.6 378.9,98.2 374.9,98.8 370.9,99.4 366.9,100.0 362.9,100.6 358.9,101.2 354.9,101.8 350.9,102.4 346.9,103.0 342.9,103.6 338.9,104.2 334.9,104.8 330.9,105.4 326.9,106.0 322.9,106.6 318.9,107.2 314.9,107.8" stroke="#181818"/>
<polyline points="314.9,107.8 311.4,109.4 307.9,111.0 304.3,112.5 300.8,114.1 297.2,115.7 293.7,117.2 290.1,118.8 286.6,120.4 283.0,122.0 279.4,123.5 275.8,125.1 272.2,126.7 268.6,128.3 265.0,129.9 261.4,131.5 257.8,133.1 254.2,134.7 250.5,136.3 246.9,137.9 243.3,139.5 239.6,141.1 236.0,142.7 232.3,144.4 228.7,146.0" stroke="#181818"/>
<polyline points="228.7,146.0 226.0,148.4 223.3,150.7 220.6,153.1 217.9,155.5 215.2,157.9 212.5,160.4 209.7,162.8 207.0,165.2 204.3,167.6 201.5,170.1 198.8,172.5 196.0,175.0 193.2,177.4 190.4,179.9 187.7,182.4 184.9,184.9 182.1,187.4 179.2,189.9 176.4,192.4 173.6,194.9 170.8,197.4 167.9,199.9 165.1,202.5 162.2,205.0" stroke="#181818"/>
<polyline points="162.2,205.0 160.8,208.0 159.3,211.0 157.9,214.0 156.4,217.0 154.9,220.0 153.5,223.0 152.0,226.1 150.5,229.1 149.0,232.2 147.5,235.3 146.0,238.4 144.5,241.5 143.0,244.6 141.5,247.7 140.0,250.9 138.5,254.0 136.9,257.2 135.4,260.3 133.9,263.5 132.3,266.7 130.8,269.9 129.2,273.1 127.6,276.4 126.1,279.6" stroke="#181818"/>
<polyline points="126.1,279.6 126.2,282.8 126.4,286.1 126.5,289.4 126.6,292.6 126.8,295.9 126.9,299.2 127.1,302.5 127.2,305.9 127.4,309.2 127.5,312.6 127.7,315.9 127.8,319.3 127.9,322.7 128.1,326.1 128.2,329.5 128.4,333.0 128.5,336.4 128.7,339.9 128.8,343.4 129.0,346.9 129.2,350.4 129.3,353.9 129.5,357.4 129.6,361.0" stroke="#181818"/>
<polyline points="129.6,361.0 131.6,364.0 133.5,367.0 135.4,370.1 137.4,373.1 139.4,376.2 141.3,379.2 143.3,382.3 145.3,385.4 147.3,388.5" stroke="#181818"/>
<polyline points="147.3,388.5 149.3,391.6 151.3,394.7 153.3,397.9 155.4,401.0 157.4,404.2" stroke="#202020"/>
<polyline points="157.4,404.2 159.4,407.3 161.5,410.5 163.5,413.7 165.6,416.9 167.7,420.2" stroke="#282828"/>
<polyline points="167.7,420.2 169.7,423.4 171.8,426.6 173.9,429.9 176.0,433.2" stroke="#303030"/>
<polyline points="176.0,433.2 178.1,436.5" stroke="#383838"/>
<polyline points="178.1,436.5 181.8,438.6 185.5,440.8" stroke="#383838"/>
<polyline points="185.5,440.8 189.1,443.1 192.8,445.3 196.5,447.5 200.2,449.7" stroke="#404040"/>
<polyline points="200.2,449.7 203.9,451.9 207.6,454.2 211.3,456.4" stroke="#484848"/>
<polyline points="211.3,456.4 215.1,458.7 218.8,460.9 222.6,463.2" stroke="#505050"/>
<polyline points="222.6,463.2 226.4,465.5 230.2,467.7 234.0,470.0" stroke="#585858"/>
<polyline points="234.0,470.0 237.8,472.3 241.6,474.6" stroke="#606060"/>
<polyline points="241.6,474.6 245.4,476.9 249.2,479.2 253.1,481.5" stroke="#686868"/>
<polyline points="253.1,481.5 256.9,483.9 260.8,486.2 264.7,488.5" stroke="#707070"/>
<polyline points="264.7,488.5 268.6,490.9" stroke="#787878"/>
<polyline points="268.6,490.9 273.4,491.7 278.3,492.5" stroke="#787878"/>
<polyline points="278.3,492.5 283.1,493.4 288.0,494.2" stroke="#808080"/>
<polyline points="288.0,494.2 292.9,495.0 297.7,495.8 302.6,496.7" stroke="#888888"/>
<polyline points="302.6,496.7 307.5,497.5 312.4,498.3 317.3,499.2" stroke="#909090"/>
<polyline points="317.3,499.2 322.2,500.0 327.1,500.8" stroke="#989898"/>
<polyline points="327.1,500.8 332.0,501.7 337.0,502.5 341.9,503.3" stroke="#a0a0a0"/>
<polyline points="341.9,503.3 346.8,504.2 351.8,505.0 356.7,505.9" stroke="#a8a8a8"/>
<polyline points="356.7,505.9 361.7,506.7 366.7,507.6" stroke="#b0b0b0"/>
<polyline points="366.7,507.6 371.6,508.4 376.6,509.2 381.6,510.1" stroke="#b8b8b8"/>
<polyline points="381.6,510.1 386.6,510.9" stroke="#c0c0c0"/>
<polyline points="386.6,510.9 391.7,510.1 396.8,509.3" stroke="#c0c0c0"/>
<polyline points="396.8,509.3 401.9,508.4 407.0,507.6 412.1,506.7" stroke="#c8c8c8"/>
<polyline points="412.1,506.7 417.1,505.9 422.2,505.0 427.3,504.2" stroke="#d0d0d0"/>
<polyline points="427.3,504.2 432.4,503.4 437.5,502.5 442.5,501.7" stroke="#d8d8d8"/>
<polyline points="442.5,501.7 447.6,500.8 452.7,500.0 457.8,499.1" stroke="#e0e0e0"/>
<polyline points="457.8,499.1 462.8,498.3 467.9,497.5 472.9,496.6 478.0,495.8" stroke="#e8e8e8"/>
<polyline points="478.0,495.8 483.1,494.9 488.1,494.1 493.2,493.3 498.2,492.4" stroke="#f0f0f0"/>
<polyline points="498.2,492.4 503.3,491.6 508.3,490.8" stroke="#f8f8f8"/>
<polyline points="509.4,566.9 513.4,564.6" stroke="#989898"/>
<polyline points="513.4,564.6 517.4,562.4 521.3,560.1 525.3,557.8 529.2,555.5 533.1,553.3 537.1,551.0" stroke="#a0a0a0"/>
<polyline points="537.1,551.0 541.0,548.7 544.9,546.5 548.8,544.2 552.7,542.0 556.6,539.8 560.5,537.5 564.3,535.3" stroke="#a8a8a8"/>
<polyline points="564.3,535.3 568.2,533.1 572.1,530.8 575.9,528.6 579.8,526.4 583.6,524.2 587.4,522.0 591.3,519.8 595.1,517.6 598.9,515.4 602.7,513.2" stroke="#b0b0b0"/>
<polyline points="602.7,513.2 605.1,509.9 607.5,506.7 610.0,503.4 612.4,500.2 614.8,497.0 617.2,493.7" stroke="#b0b0b0"/>
<polyline points="186.9,490.8 188.8,493.9 190.8,497.1 192.8,500.2 194.8,503.4 196.8,506.6 198.8,509.8 200.8,513.0" stroke="#181818"/>
<polyline points="200.8,513.0 204.3,515.1 207.7,517.3 211.2,519.5 214.6,521.6 218.1,523.8 221.6,526.0 225.1,528.2 228.6,530.3 232.1,532.5 235.6,534.7 239.1,537.0" stroke="#181818"/>
<polyline points="239.1,537.0 242.7,539.2 246.2,541.4 249.8,543.6 253.3,545.9 256.9,548.1" stroke="#202020"/>
<polyline points="256.9,548.1 260.5,550.3 264.1,552.6 267.7,554.8 271.3,557.1" stroke="#282828"/>
<polyline points="271.3,557.1 275.0,559.4 278.6,561.6 282.2,563.9 285.9,566.2" stroke="#303030"/>
<polyline points="285.9,566.2 290.4,567.0 294.9,567.8 299.5,568.7 304.0,569.5" stroke="#383838"/>
<polyline points="304.0,569.5 308.6,570.3 313.1,571.1 317.7,571.9 322.2,572.8" stroke="#404040"/>
<polyline points="322.2,572.8 326.8,573.6 331.4,574.4 336.0,575.2" stroke="#484848"/>
<polyline points="336.0,575.2 340.5,576.1 345.1,576.9 349.7,577.7 354.3,578.5" stroke="#505050"/>
<polyline points="354.3,578.5 358.9,579.4 363.6,580.2 368.2,581.0" stroke="#585858"/>
<polyline points="368.2,581.0 372.8,581.9 377.4,582.7 382.1,583.5" stroke="#606060"/>
<polyline points="382.1,583.5 386.7,584.4 391.4,585.2 396.0,586.1" stroke="#686868"/>
<polyline points="396.0,586.1 400.8,585.3" stroke="#686868"/>
<polyline points="400.8,585.3 405.5,584.5 410.3,583.7 415.0,582.9 419.7,582.1" stroke="#707070"/>
<polyline points="419.7,582.1 424.5,581.3 429.2,580.5 433.9,579.7" stroke="#787878"/>
<polyline points="433.9,579.7 438.7,578.9 443.4,578.1 448.1,577.3 452.9,576.5" stroke="#808080"/>
<polyline points="452.9,576.5 457.6,575.7 462.3,574.9 467.0,574.1 471.7,573.3" stroke="#888888"/>
<polyline points="471.7,573.3 476.5,572.5 481.2,571.7 485.9,570.9 490.6,570.1" stroke="#909090"/>
<polyline points="490.6,570.1 495.3,569.3 500.0,568.5 504.7,567.7 509.4,566.9" stroke="#989898"/>
<polyline points="489.4,582.8 492.3,581.1 495.3,579.4 498.2,577.7" stroke="#202020"/>
<polyline points="498.2,577.7 501.1,576.0 504.1,574.3 507.0,572.6" stroke="#282828"/>
<polyline points="507.0,572.6 509.9,570.9 512.8,569.2 515.8,567.5" stroke="#303030"/>
<polyline points="515.8,567.5 518.7,565.9 521.6,564.2 524.5,562.5" stroke="#383838"/>
<polyline points="524.5,562.5 527.4,560.8 530.3,559.2 533.2,557.5" stroke="#404040"/>
<polyline points="533.2,557.5 536.0,555.8 538.9,554.2 541.8,552.5 544.7,550.9" stroke="#484848"/>
<polyline points="544.7,550.9 547.5,549.2 550.4,547.5 553.3,545.9" stroke="#505050"/>
<polyline points="553.3,545.9 556.1,544.2 559.0,542.6" stroke="#585858"/>
<polyline points="559.0,542.6 560.8,540.1" stroke="#585858"/>
<polyline points="560.8,540.1 562.7,537.7 564.5,535.2 566.4,532.8 568.2,530.3" stroke="#606060"/>
<polyline points="568.2,530.3 570.1,527.9 571.9,525.5 573.7,523.1 575.5,520.6 577.4,518.2" stroke="#686868"/>
<polyline points="577.4,518.2 579.2,515.8 581.0,513.4 582.8,511.0 584.6,508.6" stroke="#707070"/>
<polyline points="584.6,508.6 586.4,506.2 588.2,503.9 590.0,501.5 591.8,499.1 593.6,496.8" stroke="#787878"/>
<polyline points="593.6,496.8 595.3,494.4 597.1,492.1" stroke="#808080"/>
<polyline points="227.3,492.2 228.8,494.5 230.3,496.8 231.8,499.2 233.3,501.5 234.9,503.8 236.4,506.2 237.9,508.5 239.4,510.9 241.0,513.2 242.5,515.6 244.0,517.9 245.6,520.3 247.1,522.7 248.7,525.1 250.3,527.5 251.8,529.9 253.4,532.3 255.0,534.7 256.5,537.1 258.1,539.6 259.7,542.0" stroke="#181818"/>
<polyline points="259.7,542.0 262.3,543.6 264.9,545.3 267.6,546.9 270.2,548.5 272.9,550.2 275.5,551.8 278.2,553.5 280.8,555.2 283.5,556.8 286.2,558.5 288.8,560.1 291.5,561.8 294.2,563.5 296.9,565.2 299.6,566.8 302.3,568.5 305.0,570.2 307.7,571.9 310.4,573.6 313.1,575.3 315.9,577.0 318.6,578.7 321.3,580.4 324.1,582.1" stroke="#181818"/>
<polyline points="324.1,582.1 327.4,582.7 330.8,583.3 334.2,583.9 337.6,584.5 340.9,585.2 344.3,585.8 347.7,586.4 351.1,587.0 354.5,587.6 357.9,588.2 361.3,588.8 364.7,589.5 368.1,590.1 371.5,590.7 374.9,591.3 378.3,591.9 381.7,592.6 385.1,593.2 388.6,593.8 392.0,594.4 395.4,595.0 398.9,595.7 402.3,596.3 405.7,596.9" stroke="#181818"/>
<polyline points="405.7,596.9 409.2,596.3 412.7,595.7 416.2,595.1 419.7,594.5 423.2,594.0 426.7,593.4 430.2,592.8 433.7,592.2 437.2,591.6 440.6,591.0 444.1,590.4 447.6,589.8 451.1,589.2 454.6,588.6 458.1,588.1 461.6,587.5 465.0,586.9 468.5,586.3 472.0,585.7 475.5,585.1 479.0,584.5 482.4,583.9 485.9,583.3 489.4,582.8" stroke="#181818"/>
<polyline points="456.6,547.5 458.1,546.7 459.6,545.8 461.2,544.9 462.7,544.1 464.2,543.2 465.7,542.4 467.3,541.5 468.8,540.7 470.3,539.8 471.8,538.9 473.3,538.1 474.8,537.2 476.4,536.4 477.9,535.5 479.4,534.7 480.9,533.8 482.4,533.0 483.9,532.1" stroke="#181818"/>
<polyline points="483.9,532.1 485.4,531.3 486.9,530.4 488.4,529.6 489.9,528.7 491.4,527.9 492.9,527.0" stroke="#202020"/>
<polyline points="492.9,527.0 493.9,525.8 494.9,524.5 495.9,523.2 496.9,522.0 497.9,520.7 498.9,519.5 499.9,518.2" stroke="#282828"/>
<polyline points="499.9,518.2 500.9,516.9 501.9,515.7 502.9,514.4 503.9,513.2 504.9,511.9 505.9,510.7 506.9,509.4 507.8,508.2" stroke="#303030"/>
<polyline points="507.8,508.2 508.8,506.9 509.8,505.7 510.8,504.5 511.8,503.2 512.8,502.0 513.7,500.7 514.7,499.5 515.7,498.3" stroke="#383838"/>
<polyline points="515.7,498.3 516.7,497.0" stroke="#404040"/>
<polyline points="516.7,497.0 517.0,495.6 517.3,494.1 517.7,492.7" stroke="#404040"/>
<polyline points="315.9,492.8 316.1,494.2 316.3,495.7 316.5,497.1" stroke="#181818"/>
<polyline points="316.5,497.1 317.4,498.3 318.2,499.5 319.1,500.8 319.9,502.0 320.8,503.2 321.7,504.4 322.5,505.7 323.4,506.9 324.2,508.1 325.1,509.4 326.0,510.6 326.8,511.8 327.7,513.1 328.6,514.3 329.4,515.6 330.3,516.8 331.2,518.1 332.1,519.3 332.9,520.6 333.8,521.8 334.7,523.1 335.6,524.3 336.5,525.6 337.3,526.8" stroke="#181818"/>
<polyline points="337.3,526.8 338.7,527.7 340.1,528.5 341.6,529.4 343.0,530.2 344.4,531.1 345.8,531.9 347.2,532.8 348.6,533.6 350.0,534.5 351.5,535.3 352.9,536.2 354.3,537.0 355.7,537.9 357.2,538.7 358.6,539.6 360.0,540.4 361.4,541.3 362.9,542.2 364.3,543.0 365.7,543.9 367.2,544.7 368.6,545.6 370.1,546.5 371.5,547.3" stroke="#181818"/>
<polyline points="371.5,547.3 373.2,547.6 375.0,547.9 376.7,548.3 378.5,548.6 380.2,548.9 382.0,549.2 383.7,549.5 385.5,549.8 387.2,550.1 389.0,550.4 390.8,550.7 392.5,551.0 394.3,551.3 396.0,551.6 397.8,551.9 399.5,552.3 401.3,552.6 403.1,552.9 404.8,553.2 406.6,553.5 408.3,553.8 410.1,554.1 411.9,554.4 413.6,554.7" stroke="#181818"/>
<polyline points="413.6,554.7 415.4,554.4 417.2,554.1 419.0,553.8 420.8,553.5 422.6,553.2 424.4,552.9 426.2,552.6 428.0,552.3 429.8,552.0 431.6,551.7 433.3,551.4 435.1,551.1 436.9,550.8 438.7,550.5 440.5,550.2 442.3,549.9 444.1,549.6 445.9,549.3 447.7,549.0 449.4,548.7 451.2,548.4 453.0,548.1 454.8,547.8 456.6,547.5" stroke="#181818"/>
<polyline points="384.3,107.3 386.4,111.9" stroke="#d0d0d0"/>
<polyline points="386.4,111.9 388.5,116.4 390.5,121.0" stroke="#d8d8d8"/>
<polyline points="390.5,121.0 392.6,125.6 394.7,130.2" stroke="#e0e0e0"/>
<polyline points="394.7,130.2 396.8,134.8 398.9,139.5 401.0,144.2" stroke="#e8e8e8"/>
<polyline points="401.0,144.2 403.1,148.8 405.2,153.5" stroke="#f0f0f0"/>
<polyline points="405.2,153.5 407.3,158.3 409.5,163.0" stroke="#f8f8f8"/>
<polyline points="409.5,163.0 411.6,167.7 413.8,172.5 415.9,177.3 418.1,182.1 420.3,186.9 422.5,191.8 424.7,196.6 426.9,201.5 429.1,206.4 431.3,211.3 433.5,216.2 435.7,221.2" stroke="#ffffff"/>
<polyline points="384.3,107.3 388.3,111.0" stroke="#d0d0d0"/>
<polyline points="388.3,111.0 392.4,114.7 396.4,118.4" stroke="#d8d8d8"/>
<polyline points="396.4,118.4 400.4,122.1 404.5,125.8" stroke="#e0e0e0"/>
<polyline points="404.5,125.8 408.5,129.5 412.6,133.2" stroke="#e8e8e8"/>
<polyline points="412.6,133.2 416.6,136.9 420.7,140.7" stroke="#f0f0f0"/>
<polyline points="420.7,140.7 424.8,144.5 428.9,148.2" stroke="#f8f8f8"/>
<polyline points="428.9,148.2 433.1,152.0 437.2,155.8 441.3,159.6 445.5,163.4 449.7,167.2 453.8,171.1 458.0,174.9 462.2,178.8 466.4,182.6 470.7,186.5 474.9,190.4 479.1,194.3 483.4,198.2" stroke="#ffffff"/>
<polyline points="384.3,107.3 389.7,109.7" stroke="#d0d0d0"/>
<polyline points="389.7,109.7 395.1,112.1 400.4,114.5" stroke="#d8d8d8"/>
<polyline points="400.4,114.5 405.8,116.9 411.2,119.3" stroke="#e0e0e0"/>
<polyline points="411.2,119.3 416.5,121.7 421.9,124.1" stroke="#e8e8e8"/>
<polyline points="421.9,124.1 427.3,126.5 432.7,128.9" stroke="#f0f0f0"/>
<polyline points="432.7,128.9 438.1,131.3 443.5,133.7" stroke="#f8f8f8"/>
<polyline points="443.5,133.7 448.9,136.2 454.4,138.6 459.8,141.0 465.2,143.4 470.7,145.9 476.1,148.3 481.6,150.7 487.0,153.2 492.5,155.6 498.0,158.0 503.5,160.5 509.0,162.9 514.4,165.4" stroke="#ffffff"/>
<polyline points="384.3,107.3 390.2,108.2" stroke="#d0d0d0"/>
<polyline points="390.2,108.2 396.1,109.1 402.0,110.0 407.9,110.9" stroke="#d8d8d8"/>
<polyline points="407.9,110.9 413.8,111.8 419.7,112.7" stroke="#e0e0e0"/>
<polyline points="419.7,112.7 425.5,113.6 431.4,114.5 437.3,115.4" stroke="#e8e8e8"/>
<polyline points="437.3,115.4 443.1,116.3 449.0,117.2 454.8,118.1" stroke="#f0f0f0"/>
<polyline points="454.8,118.1 460.6,118.9 466.5,119.8 472.3,120.7" stroke="#f8f8f8"/>
<polyline points="472.3,120.7 478.1,121.6 484.0,122.5 489.8,123.4 495.6,124.3 501.4,125.2 507.2,126.1 513.0,126.9 518.8,127.8 524.6,128.7" stroke="#ffffff"/>
<polyline points="384.3,107.3 389.9,106.7 395.5,106.2" stroke="#d0d0d0"/>
<polyline points="395.5,106.2 401.0,105.6 406.5,105.0 412.0,104.5 417.5,103.9" stroke="#d8d8d8"/>
<polyline points="417.5,103.9 422.9,103.4 428.4,102.8 433.8,102.2 439.3,101.7 444.7,101.1 450.1,100.6" stroke="#e0e0e0"/>
<polyline points="450.1,100.6 455.4,100.0 460.8,99.5 466.2,98.9 471.5,98.4 476.8,97.8 482.1,97.3 487.4,96.8 492.7,96.2 497.9,95.7 503.2,95.1 508.4,94.6" stroke="#e8e8e8"/>
<polyline points="508.4,94.6 513.6,94.1" stroke="#f0f0f0"/>
<polyline points="384.3,107.3 388.7,105.5 393.1,103.7 397.5,102.0 401.8,100.2 406.1,98.4 410.4,96.7 414.7,94.9 418.9,93.2 423.2,91.4 427.4,89.7 431.6,88.0 435.8,86.3 439.9,84.6 444.1,82.9 448.2,81.2 452.3,79.5 456.4,77.9 460.5,76.2" stroke="#d0d0d0"/>
<polyline points="460.5,76.2 464.5,74.6 468.6,72.9 472.6,71.3 476.6,69.6 480.6,68.0 484.5,66.4" stroke="#c8c8c8"/>
<polyline points="384.3,107.3 386.9,104.7 389.5,102.1 392.0,99.6" stroke="#d0d0d0"/>
<polyline points="392.0,99.6 394.6,97.0 397.1,94.5 399.6,92.0 402.1,89.5 404.5,87.0" stroke="#c8c8c8"/>
<polyline points="404.5,87.0 407.0,84.5 409.4,82.1 411.9,79.6 414.3,77.2" stroke="#c0c0c0"/>
<polyline points="414.3,77.2 416.7,74.8 419.1,72.4 421.5,70.0 423.8,67.6" stroke="#b8b8b8"/>
<polyline points="423.8,67.6 426.2,65.2 428.5,62.9 430.8,60.5" stroke="#b0b0b0"/>
<polyline points="430.8,60.5 433.1,58.2 435.4,55.9 437.7,53.6" stroke="#a8a8a8"/>
<polyline points="437.7,53.6 440.0,51.3 442.3,49.0" stroke="#a0a0a0"/>
<polyline points="384.3,107.3 384.7,104.5 385.1,101.6" stroke="#d0d0d0"/>
<polyline points="385.1,101.6 385.5,98.8 385.9,96.1" stroke="#c8c8c8"/>
<polyline points="385.9,96.1 386.2,93.3 386.6,90.5 387.0,87.8" stroke="#c0c0c0"/>
<polyline points="387.0,87.8 387.3,85.1 387.7,82.4" stroke="#b8b8b8"/>
<polyline points="387.7,82.4 388.1,79.7 388.4,77.0 388.8,74.4" stroke="#b0b0b0"/>
<polyline points="388.8,74.4 389.1,71.8 389.5,69.1" stroke="#a8a8a8"/>
<polyline points="389.5,69.1 389.8,66.5 390.2,63.9" stroke="#a0a0a0"/>
<polyline points="390.2,63.9 390.5,61.4 390.9,58.8 391.2,56.3" stroke="#989898"/>
<polyline points="391.2,56.3 391.6,53.8 391.9,51.3" stroke="#909090"/>
<polyline points="391.9,51.3 392.2,48.8 392.6,46.3" stroke="#888888"/>
<polyline points="392.6,46.3 392.9,43.8" stroke="#808080"/>
<polyline points="384.3,107.3 382.5,104.8" stroke="#d0d0d0"/>
<polyline points="382.5,104.8 380.7,102.3 378.8,99.8" stroke="#c8c8c8"/>
<polyline points="378.8,99.8 377.0,97.4 375.2,94.9" stroke="#c0c0c0"/>
<polyline points="375.2,94.9 373.4,92.5 371.6,90.1" stroke="#b8b8b8"/>
<polyline points="371.6,90.1 369.8,87.7 368.1,85.3" stroke="#b0b0b0"/>
<polyline points="368.1,85.3 366.3,82.9 364.6,80.6" stroke="#a8a8a8"/>
<polyline points="364.6,80.6 362.8,78.3 361.1,75.9" stroke="#a0a0a0"/>
<polyline points="361.1,75.9 359.4,73.6 357.7,71.3" stroke="#989898"/>
<polyline points="357.7,71.3 356.0,69.0" stroke="#909090"/>
<polyline points="356.0,69.0 354.3,66.8 352.7,64.5" stroke="#888888"/>
<polyline points="352.7,64.5 351.0,62.3 349.4,60.0" stroke="#808080"/>
<polyline points="349.4,60.0 347.7,57.8 346.1,55.6" stroke="#787878"/>
<polyline points="346.1,55.6 344.5,53.4 342.9,51.2" stroke="#707070"/>
<polyline points="384.3,107.3 380.6,105.7" stroke="#d0d0d0"/>
<polyline points="380.6,105.7 376.8,104.1 373.0,102.4" stroke="#c8c8c8"/>
<polyline points="373.0,102.4 369.3,100.8 365.6,99.2" stroke="#c0c0c0"/>
<polyline points="365.6,99.2 361.9,97.6" stroke="#b8b8b8"/>
<polyline points="361.9,97.6 358.2,96.1 354.5,94.5" stroke="#b0b0b0"/>
<polyline points="354.5,94.5 350.9,92.9 347.3,91.4" stroke="#a8a8a8"/>
<polyline points="347.3,91.4 343.7,89.8" stroke="#a0a0a0"/>
<polyline points="343.7,89.8 340.1,88.3 336.6,86.7" stroke="#989898"/>
<polyline points="336.6,86.7 333.0,85.2 329.5,83.7" stroke="#909090"/>
<polyline points="329.5,83.7 326.0,82.2 322.5,80.7" stroke="#888888"/>
<polyline points="322.5,80.7 319.0,79.2" stroke="#808080"/>
<polyline points="319.0,79.2 315.6,77.7 312.1,76.2" stroke="#787878"/>
<polyline points="312.1,76.2 308.7,74.7 305.3,73.3" stroke="#707070"/>
<polyline points="305.3,73.3 301.9,71.8 298.6,70.4" stroke="#686868"/>
<polyline points="384.3,107.3 379.2,107.0" stroke="#d0d0d0"/>
<polyline points="379.2,107.0 374.1,106.6 369.0,106.2" stroke="#c8c8c8"/>
<polyline points="369.0,106.2 363.9,105.9 358.8,105.5" stroke="#c0c0c0"/>
<polyline points="358.8,105.5 353.8,105.2 348.7,104.8" stroke="#b8b8b8"/>
<polyline points="348.7,104.8 343.7,104.5" stroke="#b0b0b0"/>
<polyline points="343.7,104.5 338.7,104.1 333.7,103.8" stroke="#a8a8a8"/>
<polyline points="333.7,103.8 328.8,103.4 323.9,103.1" stroke="#a0a0a0"/>
<polyline points="323.9,103.1 318.9,102.7 314.0,102.4" stroke="#989898"/>
<polyline points="314.0,102.4 309.2,102.0" stroke="#909090"/>
<polyline points="309.2,102.0 304.3,101.7 299.4,101.4" stroke="#888888"/>
<polyline points="299.4,101.4 294.6,101.0 289.8,100.7" stroke="#808080"/>
<polyline points="289.8,100.7 285.0,100.4 280.2,100.0" stroke="#787878"/>
<polyline points="280.2,100.0 275.5,99.7 270.8,99.4" stroke="#707070"/>
<polyline points="270.8,99.4 266.0,99.0" stroke="#686868"/>
<polyline points="384.3,107.3 378.6,108.4" stroke="#d0d0d0"/>
<polyline points="378.6,108.4 372.9,109.6 367.3,110.7 361.6,111.8" stroke="#c8c8c8"/>
<polyline points="361.6,111.8 355.9,112.9 350.3,114.0" stroke="#c0c0c0"/>
<polyline points="350.3,114.0 344.6,115.1 339.0,116.3" stroke="#b8b8b8"/>
<polyline points="339.0,116.3 333.4,117.4 327.8,118.5" stroke="#b0b0b0"/>
<polyline points="327.8,118.5 322.2,119.6 316.6,120.7" stroke="#a8a8a8"/>
<polyline points="316.6,120.7 311.0,121.8 305.5,122.9" stroke="#a0a0a0"/>
<polyline points="305.5,122.9 299.9,124.0 294.4,125.1" stroke="#989898"/>
<polyline points="294.4,125.1 288.8,126.1 283.3,127.2" stroke="#909090"/>
<polyline points="283.3,127.2 277.8,128.3 272.3,129.4" stroke="#888888"/>
<polyline points="272.3,129.4 266.8,130.5 261.3,131.6" stroke="#808080"/>
<polyline points="261.3,131.6 255.9,132.6 250.4,133.7" stroke="#787878"/>
<polyline points="384.3,107.3 379.0,109.9 373.6,112.5" stroke="#d0d0d0"/>
<polyline points="373.6,112.5 368.2,115.1 362.8,117.7 357.4,120.3 352.1,122.9" stroke="#c8c8c8"/>
<polyline points="352.1,122.9 346.7,125.5 341.3,128.1 335.9,130.7" stroke="#c0c0c0"/>
<polyline points="335.9,130.7 330.5,133.3 325.2,135.9 319.8,138.5" stroke="#b8b8b8"/>
<polyline points="319.8,138.5 314.4,141.1 309.0,143.7 303.6,146.3" stroke="#b0b0b0"/>
<polyline points="303.6,146.3 298.2,148.9 292.8,151.5" stroke="#a8a8a8"/>
<polyline points="292.8,151.5 287.5,154.1 282.1,156.7 276.7,159.3" stroke="#a0a0a0"/>
<polyline points="276.7,159.3 271.3,161.9 265.9,164.5" stroke="#989898"/>
<polyline points="265.9,164.5 260.5,167.1 255.1,169.7" stroke="#909090"/>
<polyline points="384.3,107.3 380.1,111.1 375.9,115.0 371.7,118.8 367.4,122.7 363.2,126.5 358.9,130.4 354.7,134.3" stroke="#d0d0d0"/>
<polyline points="354.7,134.3 350.4,138.1 346.1,142.0 341.8,145.9 337.5,149.8 333.2,153.7 328.9,157.6 324.6,161.6" stroke="#c8c8c8"/>
<polyline points="324.6,161.6 320.2,165.5 315.9,169.4 311.5,173.4 307.2,177.3 302.8,181.3" stroke="#c0c0c0"/>
<polyline points="302.8,181.3 298.5,185.3 294.1,189.2 289.7,193.2 285.3,197.2" stroke="#b8b8b8"/>
<polyline points="285.3,197.2 280.9,201.2" stroke="#b0b0b0"/>
<polyline points="384.3,107.3 381.9,111.9 379.5,116.6 377.1,121.3" stroke="#d0d0d0"/>
<polyline points="377.1,121.3 374.7,125.9 372.3,130.6 369.8,135.3 367.4,140.1 364.9,144.8 362.5,149.5 360.0,154.3 357.5,159.1 355.1,163.9 352.6,168.7 350.1,173.5 347.6,178.4 345.0,183.3 342.5,188.1 340.0,193.0 337.4,197.9 334.9,202.9 332.3,207.8 329.8,212.8 327.2,217.7 324.6,222.7" stroke="#d8d8d8"/>
<polyline points="384.3,107.3 384.2,112.2" stroke="#d0d0d0"/>
<polyline points="384.2,112.2 384.0,117.1 383.8,122.0 383.6,127.0" stroke="#d8d8d8"/>
<polyline points="383.6,127.0 383.4,131.9 383.2,136.9 383.0,141.9 382.8,146.9" stroke="#e0e0e0"/>
<polyline points="382.8,146.9 382.6,152.0 382.4,157.0 382.2,162.1" stroke="#e8e8e8"/>
<polyline points="382.2,162.1 382.0,167.2 381.8,172.3 381.5,177.4 381.3,182.6 381.1,187.8" stroke="#f0f0f0"/>
<polyline points="381.1,187.8 380.9,193.0 380.7,198.2 380.5,203.4 380.3,208.7 380.1,214.0 379.9,219.3" stroke="#f8f8f8"/>
<polyline points="379.9,219.3 379.7,224.6 379.5,229.9" stroke="#ffffff"/>
<polyline points="435.7,221.2 437.7,227.1 439.6,233.1 441.5,239.0 443.4,244.9 445.3,250.9 447.3,256.8 449.2,262.7 451.1,268.7 453.0,274.6 455.0,280.6 456.9,286.5 458.8,292.5 460.7,298.4 462.7,304.4 464.6,310.3 466.5,316.3 468.4,322.2 470.4,328.2 472.3,334.1 474.2,340.1 476.2,346.1 478.1,352.0 480.0,358.0 481.9,363.9" stroke="#ffffff"/>
<polyline points="483.4,198.2 486.9,203.3 490.4,208.4 493.8,213.5 497.3,218.6 500.8,223.7 504.2,228.8 507.7,233.9 511.2,238.9 514.6,244.0 518.1,249.1 521.5,254.2 525.0,259.2 528.4,264.3 531.9,269.4 535.3,274.4 538.8,279.5 542.2,284.5 545.7,289.6 549.1,294.6 552.6,299.7 556.0,304.7 559.4,309.8 562.9,314.8 566.3,319.8" stroke="#ffffff"/>
<polyline points="514.4,165.4 518.9,169.3 523.3,173.3 527.7,177.2 532.1,181.1 536.5,185.0 540.8,188.9 545.2,192.8 549.6,196.7 553.9,200.6 558.3,204.5 562.6,208.3 566.9,212.2 571.2,216.0 575.6,219.9 579.9,223.7 584.2,227.6 588.5,231.4 592.7,235.2 597.0,239.0 601.3,242.8 605.5,246.6 609.8,250.4 614.0,254.2 618.3,258.0" stroke="#ffffff"/>
<polyline points="524.6,128.7 529.2,131.4 533.9,134.1 538.5,136.7 543.1,139.4 547.6,142.0 552.2,144.7 556.7,147.3 561.3,149.9 565.8,152.5 570.3,155.1 574.8,157.7 579.2,160.3 583.7,162.9 588.1,165.5 592.6,168.0 597.0,170.6 601.4,173.1 605.8,175.7 610.1,178.2 614.5,180.7 618.8,183.2 623.2,185.7 627.5,188.2 631.8,190.7" stroke="#ffffff"/>
<polyline points="513.6,94.1 517.8,95.6 522.0,97.2 526.1,98.7 530.3,100.2 534.4,101.7" stroke="#f0f0f0"/>
<polyline points="534.4,101.7 538.5,103.2 542.5,104.7 546.6,106.2 550.6,107.7 554.6,109.2 558.6,110.7 562.6,112.1 566.5,113.6 570.5,115.1 574.4,116.5 578.3,117.9" stroke="#e8e8e8"/>
<polyline points="578.3,117.9 582.2,119.4 586.0,120.8 589.9,122.2 593.7,123.6 597.5,125.0" stroke="#e0e0e0"/>
<polyline points="597.5,125.0 601.3,126.4 605.1,127.8 608.8,129.2" stroke="#d8d8d8"/>
<polyline points="484.5,66.4 487.7,67.1" stroke="#c8c8c8"/>
<polyline points="487.7,67.1 490.9,67.7 494.1,68.4 497.3,69.1 500.4,69.7 503.5,70.4" stroke="#c0c0c0"/>
<polyline points="503.5,70.4 506.6,71.0 509.7,71.7 512.8,72.3 515.8,72.9 518.8,73.6" stroke="#b8b8b8"/>
<polyline points="518.8,73.6 521.9,74.2 524.8,74.8 527.8,75.5" stroke="#b0b0b0"/>
<polyline points="527.8,75.5 530.8,76.1 533.7,76.7 536.6,77.3 539.6,77.9" stroke="#a8a8a8"/>
<polyline points="539.6,77.9 542.4,78.5 545.3,79.1 548.2,79.7" stroke="#a0a0a0"/>
<polyline points="548.2,79.7 551.0,80.3" stroke="#989898"/>
<polyline points="551.0,80.3 553.8,80.9 556.7,81.5" stroke="#505050"/>
<polyline points="442.3,49.0 444.2,49.2" stroke="#a0a0a0"/>
<polyline points="444.2,49.2 446.0,49.3 447.9,49.5 449.8,49.6" stroke="#989898"/>
<polyline points="449.8,49.6 451.6,49.7 453.5,49.9 455.3,50.0" stroke="#909090"/>
<polyline points="455.3,50.0 457.1,50.2 458.9,50.3 460.7,50.4" stroke="#888888"/>
<polyline points="460.7,50.4 462.5,50.6 464.3,50.7 466.0,50.8" stroke="#808080"/>
<polyline points="466.0,50.8 467.8,51.0 469.5,51.1" stroke="#787878"/>
<polyline points="469.5,51.1 471.2,51.2 472.9,51.4 474.6,51.5 476.3,51.6 478.0,51.8 479.7,51.9 481.3,52.0 483.0,52.1 484.6,52.3" stroke="#181818"/>
<polyline points="392.9,43.8 393.3,43.8" stroke="#808080"/>
<polyline points="393.3,43.8 393.7,43.8 394.2,43.8 394.6,43.8" stroke="#787878"/>
<polyline points="394.6,43.8 395.0,43.8 395.4,43.8" stroke="#707070"/>
<polyline points="395.4,43.8 395.8,43.8 396.2,43.8" stroke="#686868"/>
<polyline points="396.2,43.8 396.6,43.8 397.0,43.7" stroke="#606060"/>
<polyline points="397.0,43.7 397.4,43.7 397.8,43.7" stroke="#585858"/>
<polyline points="397.8,43.7 398.2,43.7 398.6,43.7 399.0,43.7 399.4,43.7 399.8,43.7 400.1,43.7 400.5,43.7 400.9,43.7 401.3,43.7 401.6,43.7 402.0,43.6 402.4,43.6" stroke="#181818"/>
<polyline points="342.9,51.2 341.8,51.5 340.8,51.7" stroke="#686868"/>
<polyline points="340.8,51.7 339.7,51.9 338.7,52.1" stroke="#606060"/>
<polyline points="338.7,52.1 337.7,52.3 336.6,52.5" stroke="#585858"/>
<polyline points="336.6,52.5 335.6,52.7 334.6,52.9" stroke="#505050"/>
<polyline points="334.6,52.9 333.6,53.1 332.6,53.3" stroke="#484848"/>
<polyline points="332.6,53.3 331.6,53.5 330.7,53.7" stroke="#404040"/>
<polyline points="330.7,53.7 329.7,53.9" stroke="#383838"/>
<polyline points="329.7,53.9 328.7,54.1 327.8,54.3 326.8,54.4 325.9,54.6 324.9,54.8 324.0,55.0 323.1,55.2 322.2,55.4 321.2,55.6 320.3,55.7 319.4,55.9" stroke="#181818"/>
<polyline points="298.6,70.4 296.2,71.1 293.8,71.9" stroke="#606060"/>
<polyline points="293.8,71.9 291.4,72.7" stroke="#585858"/>
<polyline points="291.4,72.7 289.1,73.5 286.7,74.2" stroke="#505050"/>
<polyline points="286.7,74.2 284.4,75.0 282.1,75.8" stroke="#484848"/>
<polyline points="282.1,75.8 279.8,76.5 277.5,77.3 275.3,78.0" stroke="#404040"/>
<polyline points="275.3,78.0 273.0,78.7 270.8,79.5" stroke="#383838"/>
<polyline points="270.8,79.5 268.6,80.2 266.4,80.9" stroke="#303030"/>
<polyline points="266.4,80.9 264.2,81.6 262.0,82.4 259.8,83.1" stroke="#282828"/>
<polyline points="259.8,83.1 257.7,83.8 255.6,84.5 253.4,85.2 251.3,85.9 249.2,86.6 247.1,87.2 245.1,87.9" stroke="#181818"/>
<polyline points="266.0,99.0 262.6,100.7 259.2,102.4" stroke="#606060"/>
<polyline points="259.2,102.4 255.8,104.0 252.4,105.7" stroke="#585858"/>
<polyline points="252.4,105.7 249.0,107.3 245.7,109.0" stroke="#505050"/>
<polyline points="245.7,109.0 242.4,110.6 239.1,112.2" stroke="#484848"/>
<polyline points="239.1,112.2 235.8,113.8 232.5,115.4" stroke="#404040"/>
<polyline points="232.5,115.4 229.3,117.0 226.0,118.6 222.8,120.1" stroke="#383838"/>
<polyline points="222.8,120.1 219.6,121.7 216.4,123.3" stroke="#303030"/>
<polyline points="216.4,123.3 213.3,124.8 210.1,126.3 207.0,127.9" stroke="#282828"/>
<polyline points="207.0,127.9 203.9,129.4 200.8,130.9 197.7,132.4 194.6,133.9" stroke="#202020"/>
<polyline points="194.6,133.9 191.5,135.4 188.5,136.9" stroke="#181818"/>
<polyline points="250.4,133.7 246.4,136.5 242.4,139.3" stroke="#707070"/>
<polyline points="242.4,139.3 238.4,142.1 234.5,144.9" stroke="#686868"/>
<polyline points="234.5,144.9 230.6,147.6 226.6,150.4 222.7,153.1" stroke="#606060"/>
<polyline points="222.7,153.1 218.8,155.8 215.0,158.5" stroke="#585858"/>
<polyline points="215.0,158.5 211.1,161.2 207.3,163.9" stroke="#505050"/>
<polyline points="207.3,163.9 203.4,166.6 199.6,169.3" stroke="#484848"/>
<polyline points="199.6,169.3 195.8,171.9 192.0,174.6" stroke="#404040"/>
<polyline points="192.0,174.6 188.3,177.2 184.5,179.8 180.8,182.4" stroke="#383838"/>
<polyline points="180.8,182.4 177.1,185.0 173.4,187.6 169.7,190.2" stroke="#303030"/>
<polyline points="169.7,190.2 166.0,192.8 162.3,195.3 158.7,197.9" stroke="#282828"/>
<polyline points="255.1,169.7 251.2,173.7" stroke="#909090"/>
<polyline points="251.2,173.7 247.2,177.7 243.3,181.7 239.4,185.7" stroke="#888888"/>
<polyline points="239.4,185.7 235.5,189.7 231.6,193.7" stroke="#808080"/>
<polyline points="231.6,193.7 227.7,197.6 223.8,201.6" stroke="#787878"/>
<polyline points="223.8,201.6 219.9,205.5 216.1,209.4 212.2,213.4" stroke="#707070"/>
<polyline points="212.2,213.4 208.4,217.3 204.6,221.2" stroke="#686868"/>
<polyline points="204.6,221.2 200.7,225.1 196.9,228.9 193.1,232.8" stroke="#606060"/>
<polyline points="193.1,232.8 189.3,236.7 185.5,240.5" stroke="#585858"/>
<polyline points="185.5,240.5 181.8,244.3 178.0,248.2 174.3,252.0" stroke="#505050"/>
<polyline points="174.3,252.0 170.5,255.8 166.8,259.6 163.1,263.4" stroke="#484848"/>
<polyline points="280.9,201.2 277.7,206.4 274.5,211.5 271.3,216.6" stroke="#b0b0b0"/>
<polyline points="271.3,216.6 268.1,221.8 264.9,226.9 261.7,232.0 258.6,237.1" stroke="#a8a8a8"/>
<polyline points="258.6,237.1 255.4,242.2 252.2,247.3 249.1,252.4" stroke="#a0a0a0"/>
<polyline points="249.1,252.4 245.9,257.5 242.8,262.6 239.6,267.7" stroke="#989898"/>
<polyline points="239.6,267.7 236.5,272.7 233.3,277.8 230.2,282.8" stroke="#909090"/>
<polyline points="230.2,282.8 227.0,287.9 223.9,292.9 220.8,298.0" stroke="#888888"/>
<polyline points="220.8,298.0 217.7,303.0 214.5,308.0 211.4,313.0" stroke="#808080"/>
<polyline points="211.4,313.0 208.3,318.1 205.2,323.1" stroke="#787878"/>
<polyline points="324.6,222.7 322.8,228.7 321.0,234.6 319.2,240.6 317.4,246.5 315.7,252.5 313.9,258.4 312.1,264.4" stroke="#d8d8d8"/>
<polyline points="312.1,264.4 310.3,270.3 308.5,276.3 306.7,282.2 304.9,288.1 303.1,294.1 301.3,300.0" stroke="#d0d0d0"/>
<polyline points="301.3,300.0 299.5,306.0 297.7,311.9 296.0,317.8 294.2,323.8" stroke="#c8c8c8"/>
<polyline points="294.2,323.8 292.4,329.7 290.6,335.6 288.8,341.6 287.0,347.5 285.2,353.4" stroke="#c0c0c0"/>
<polyline points="285.2,353.4 283.4,359.4 281.6,365.3" stroke="#b8b8b8"/>
<polyline points="379.5,229.9 379.5,236.2 379.5,242.4 379.6,248.6 379.6,254.9 379.6,261.1 379.7,267.4 379.7,273.6 379.7,279.9 379.8,286.2 379.8,292.4 379.8,298.7 379.9,304.9 379.9,311.2 379.9,317.5 380.0,323.7 380.0,330.0 380.0,336.3 380.1,342.6 380.1,348.9 380.1,355.1" stroke="#ffffff"/>
<polyline points="380.1,355.1 380.2,361.4 380.2,367.7 380.2,374.0 380.3,380.3" stroke="#f8f8f8"/>
<polyline points="481.9,363.9 483.1,369.4 484.2,374.9 485.4,380.4 486.5,385.8 487.6,391.2 488.7,396.6 489.9,402.0 491.0,407.3 492.1,412.7 493.2,418.0 494.3,423.3 495.4,428.6 496.5,433.9 497.6,439.1 498.7,444.4 499.8,449.6 500.9,454.8 501.9,460.0 503.0,465.2 504.1,470.3 505.2,475.5 506.2,480.6 507.3,485.7" stroke="#ffffff"/>
<polyline points="507.3,485.7 508.3,490.8" stroke="#f8f8f8"/>
<polyline points="566.3,319.8 568.1,324.9 569.9,329.8 571.7,334.8 573.6,339.8 575.4,344.7 577.1,349.6 578.9,354.5 580.7,359.4 582.5,364.3 584.3,369.1 586.0,373.9 587.8,378.7 589.5,383.5 591.3,388.3 593.0,393.0 594.7,397.8 596.4,402.5 598.2,407.2 599.9,411.9 601.6,416.6 603.3,421.2 604.9,425.8 606.6,430.5 608.3,435.1" stroke="#ffffff"/>
<polyline points="618.3,258.0 620.5,262.3 622.7,266.6 624.8,270.9 627.0,275.2 629.1,279.5 631.3,283.7 633.4,288.0 635.5,292.2 637.6,296.4 639.7,300.5 641.8,304.7 643.9,308.8 646.0,313.0 648.1,317.1 650.1,321.2 652.2,325.2 654.2,329.3 656.3,333.3 658.3,337.3 660.3,341.3 662.3,345.3 664.3,349.3 666.3,353.3 668.3,357.2" stroke="#ffffff"/>
<polyline points="631.8,190.7 634.0,194.4 636.2,198.0 638.4,201.6 640.5,205.2 642.7,208.8 644.9,212.3 647.0,215.8 649.1,219.4 651.3,222.9 653.4,226.3 655.5,229.8 657.6,233.3 659.6,236.7" stroke="#ffffff"/>
<polyline points="659.6,236.7 661.7,240.1 663.8,243.5 665.8,246.9" stroke="#f8f8f8"/>
<polyline points="665.8,246.9 667.8,250.3 669.9,253.6 671.9,257.0" stroke="#f0f0f0"/>
<polyline points="671.9,257.0 673.9,260.3 675.9,263.6 677.9,266.9" stroke="#e8e8e8"/>
<polyline points="677.9,266.9 679.9,270.2 681.9,273.4" stroke="#e0e0e0"/>
<polyline points="608.8,129.2 610.8,132.3 612.7,135.3" stroke="#d8d8d8"/>
<polyline points="612.7,135.3 614.6,138.3 616.6,141.3 618.5,144.2 620.4,147.2" stroke="#d0d0d0"/>
<polyline points="620.4,147.2 622.2,150.1 624.1,153.1 626.0,156.0" stroke="#c8c8c8"/>
<polyline points="626.0,156.0 627.8,158.9 629.7,161.7" stroke="#c0c0c0"/>
<polyline points="629.7,161.7 631.5,164.6 633.3,167.4 635.1,170.3 636.9,173.1 638.7,175.9 640.5,178.7 642.3,181.4 644.0,184.2 645.8,186.9 647.5,189.6 649.3,192.4 651.0,195.1 652.7,197.7" stroke="#909090"/>
<polyline points="556.7,81.5 558.2,84.1" stroke="#505050"/>
<polyline points="558.2,84.1 559.7,86.7 561.1,89.2 562.6,91.8 564.1,94.3" stroke="#585858"/>
<polyline points="564.1,94.3 565.5,96.8 567.0,99.3 568.4,101.8 569.9,104.2" stroke="#606060"/>
<polyline points="569.9,104.2 571.3,106.7 572.7,109.1 574.1,111.6 575.5,114.0 576.9,116.4" stroke="#686868"/>
<polyline points="576.9,116.4 578.3,118.7 579.6,121.1 581.0,123.5 582.4,125.8 583.7,128.1" stroke="#707070"/>
<polyline points="583.7,128.1 585.1,130.4 586.4,132.7 587.7,135.0 589.0,137.3 590.3,139.6" stroke="#787878"/>
<polyline points="484.6,52.3 485.5,54.6 486.5,56.9 487.4,59.2 488.4,61.5" stroke="#181818"/>
<polyline points="488.4,61.5 489.3,63.7 490.2,66.0 491.2,68.2 492.1,70.4 493.0,72.6 493.9,74.8 494.8,77.0" stroke="#202020"/>
<polyline points="494.8,77.0 495.7,79.1 496.6,81.3 497.5,83.4 498.3,85.6 499.2,87.7 500.1,89.8 500.9,91.9 501.8,93.9" stroke="#282828"/>
<polyline points="501.8,93.9 502.6,96.0 503.5,98.0 504.3,100.1 505.2,102.1 506.0,104.1" stroke="#303030"/>
<polyline points="402.4,43.6 402.7,45.9 403.1,48.1 403.5,50.3 403.9,52.5 404.2,54.7 404.6,56.8 404.9,59.0 405.3,61.1 405.7,63.2 406.0,65.3 406.4,67.4 406.7,69.5 407.1,71.6 407.4,73.6 407.7,75.7 408.1,77.7 408.4,79.7 408.8,81.7 409.1,83.7 409.4,85.7 409.8,87.6 410.1,89.6 410.4,91.5 410.7,93.5" stroke="#181818"/>
<polyline points="319.4,55.9 319.2,58.2 319.0,60.6 318.8,62.8 318.6,65.1 318.4,67.4 318.2,69.6 318.1,71.9 317.9,74.1 317.7,76.3 317.5,78.5 317.3,80.7 317.1,82.9 316.9,85.0 316.7,87.2 316.5,89.3 316.4,91.4 316.2,93.5 316.0,95.6 315.8,97.7 315.6,99.7 315.5,101.8 315.3,103.8 315.1,105.8 314.9,107.8" stroke="#181818"/>
<polyline points="245.1,87.9 244.3,90.5 243.6,93.1 242.9,95.7 242.2,98.2 241.5,100.7 240.7,103.2 240.0,105.7 239.3,108.2 238.6,110.7 237.9,113.2 237.2,115.6 236.6,118.0 235.9,120.4 235.2,122.8 234.5,125.2 233.9,127.6 233.2,129.9 232.5,132.2 231.9,134.6 231.2,136.9 230.6,139.2 229.9,141.5 229.3,143.7 228.7,146.0" stroke="#181818"/>
<polyline points="188.5,136.9 187.3,139.9 186.2,142.9 185.0,145.9 183.9,148.9 182.7,151.9 181.6,154.8 180.5,157.7 179.3,160.6 178.2,163.5 177.1,166.4 176.0,169.3 174.9,172.1 173.8,174.9 172.7,177.7 171.7,180.5 170.6,183.3 169.5,186.1 168.5,188.8 167.4,191.6 166.3,194.3 165.3,197.0 164.3,199.7 163.2,202.3 162.2,205.0" stroke="#181818"/>
<polyline points="158.7,197.9 157.2,201.5 155.8,205.1 154.4,208.7 153.0,212.2" stroke="#202020"/>
<polyline points="153.0,212.2 151.6,215.8 150.1,219.3 148.7,222.8 147.4,226.3 146.0,229.7 144.6,233.2 143.2,236.6 141.9,240.0 140.5,243.4 139.2,246.8 137.8,250.1 136.5,253.5 135.2,256.8 133.8,260.1 132.5,263.4 131.2,266.7 129.9,269.9 128.6,273.2 127.3,276.4 126.1,279.6" stroke="#181818"/>
<polyline points="163.1,263.4 161.6,267.7 160.1,271.9 158.7,276.2" stroke="#404040"/>
<polyline points="158.7,276.2 157.2,280.4 155.8,284.6 154.4,288.8" stroke="#383838"/>
<polyline points="154.4,288.8 152.9,293.0 151.5,297.1 150.1,301.3" stroke="#303030"/>
<polyline points="150.1,301.3 148.7,305.4 147.3,309.5 145.9,313.5" stroke="#282828"/>
<polyline points="145.9,313.5 144.5,317.6 143.1,321.6 141.7,325.6 140.4,329.6 139.0,333.6" stroke="#202020"/>
<polyline points="139.0,333.6 137.6,337.6 136.3,341.5 134.9,345.5 133.6,349.4 132.3,353.3 130.9,357.1 129.6,361.0" stroke="#181818"/>
<polyline points="205.2,323.1 204.0,328.0" stroke="#787878"/>
<polyline points="204.0,328.0 202.8,332.9 201.7,337.8 200.5,342.7" stroke="#707070"/>
<polyline points="200.5,342.7 199.3,347.6 198.2,352.4 197.0,357.3" stroke="#686868"/>
<polyline points="197.0,357.3 195.9,362.1 194.7,366.9 193.6,371.6" stroke="#606060"/>
<polyline points="193.6,371.6 192.5,376.4 191.3,381.1" stroke="#585858"/>
<polyline points="191.3,381.1 190.2,385.8 189.1,390.5 188.0,395.2" stroke="#505050"/>
<polyline points="188.0,395.2 186.9,399.9 185.8,404.5 184.7,409.1" stroke="#484848"/>
<polyline points="184.7,409.1 183.6,413.7 182.5,418.3 181.4,422.9 180.3,427.4" stroke="#404040"/>
<polyline points="180.3,427.4 179.2,431.9 178.1,436.5" stroke="#383838"/>
<polyline points="281.6,365.3 281.1,370.7" stroke="#b8b8b8"/>
<polyline points="281.1,370.7 280.5,376.2 280.0,381.6 279.4,387.0 278.8,392.3" stroke="#b0b0b0"/>
<polyline points="278.8,392.3 278.3,397.7 277.7,403.0 277.2,408.3" stroke="#a8a8a8"/>
<polyline points="277.2,408.3 276.6,413.6 276.1,418.9 275.5,424.2" stroke="#a0a0a0"/>
<polyline points="275.5,424.2 275.0,429.4 274.4,434.6 273.9,439.8" stroke="#989898"/>
<polyline points="273.9,439.8 273.4,445.0 272.8,450.2 272.3,455.3" stroke="#909090"/>
<polyline points="272.3,455.3 271.8,460.5 271.2,465.6" stroke="#888888"/>
<polyline points="271.2,465.6 270.7,470.7 270.2,475.8 269.6,480.8" stroke="#808080"/>
<polyline points="269.6,480.8 269.1,485.9 268.6,490.9" stroke="#787878"/>
<polyline points="380.3,380.3 380.5,385.9 380.8,391.6" stroke="#f8f8f8"/>
<polyline points="380.8,391.6 381.1,397.2 381.4,402.8 381.6,408.4 381.9,413.9" stroke="#f0f0f0"/>
<polyline points="381.9,413.9 382.2,419.5 382.4,425.0 382.7,430.5 383.0,436.0" stroke="#e8e8e8"/>
<polyline points="383.0,436.0 383.2,441.5 383.5,446.9 383.8,452.3" stroke="#e0e0e0"/>
<polyline points="383.8,452.3 384.0,457.8 384.3,463.1 384.5,468.5" stroke="#d8d8d8"/>
<polyline points="384.5,468.5 384.8,473.9 385.1,479.2 385.3,484.6" stroke="#d0d0d0"/>
<polyline points="385.3,484.6 385.6,489.9 385.8,495.2 386.1,500.4" stroke="#c8c8c8"/>
<polyline points="386.1,500.4 386.3,505.7 386.6,510.9" stroke="#c0c0c0"/>
<polyline points="508.3,490.8 508.4,494.2" stroke="#f8f8f8"/>
<polyline points="508.4,494.2 508.4,497.5 508.5,500.9 508.5,504.2" stroke="#f0f0f0"/>
<polyline points="508.5,504.2 508.6,507.5 508.6,510.8" stroke="#e8e8e8"/>
<polyline points="508.6,510.8 508.7,514.1 508.7,517.4" stroke="#e0e0e0"/>
<polyline points="508.7,517.4 508.8,520.6 508.8,523.8" stroke="#d8d8d8"/>
<polyline points="508.8,523.8 508.9,527.0 508.9,530.2" stroke="#d0d0d0"/>
<polyline points="508.9,530.2 508.9,533.4 509.0,536.5" stroke="#c8c8c8"/>
<polyline points="509.0,536.5 509.0,539.6 509.1,542.7" stroke="#c0c0c0"/>
<polyline points="509.1,542.7 509.1,545.8 509.2,548.9" stroke="#b8b8b8"/>
<polyline points="509.2,548.9 509.2,551.9 509.2,555.0" stroke="#b0b0b0"/>
<polyline points="509.2,555.0 509.3,558.0 509.3,561.0" stroke="#a8a8a8"/>
<polyline points="509.3,561.0 509.4,564.0 509.4,566.9" stroke="#a0a0a0"/>
<polyline points="608.3,435.1 608.1,438.5 607.8,442.0 607.6,445.4 607.3,448.9 607.1,452.2 606.8,455.6 606.6,459.0" stroke="#ffffff"/>
<polyline points="606.6,459.0 606.3,462.3 606.1,465.6" stroke="#f8f8f8"/>
<polyline points="606.1,465.6 605.9,468.9 605.6,472.2" stroke="#f0f0f0"/>
<polyline points="605.6,472.2 605.4,475.5 605.2,478.7" stroke="#e8e8e8"/>
<polyline points="605.2,478.7 604.9,482.0 604.7,485.2" stroke="#e0e0e0"/>
<polyline points="604.7,485.2 604.5,488.3 604.2,491.5" stroke="#d8d8d8"/>
<polyline points="604.2,491.5 604.0,494.7" stroke="#d0d0d0"/>
<polyline points="604.0,494.7 603.8,497.8 603.6,500.9" stroke="#c8c8c8"/>
<polyline points="603.6,500.9 603.3,504.0 603.1,507.1" stroke="#c0c0c0"/>
<polyline points="603.1,507.1 602.9,510.2 602.7,513.2" stroke="#b8b8b8"/>
<polyline points="668.3,357.2 667.9,360.8 667.5,364.3 667.1,367.8 666.7,371.3" stroke="#ffffff"/>
<polyline points="666.7,371.3 666.3,374.8 665.9,378.3" stroke="#f8f8f8"/>
<polyline points="665.9,378.3 665.5,381.7 665.1,385.2 664.7,388.6" stroke="#f0f0f0"/>
<polyline points="664.7,388.6 664.3,392.0 663.9,395.3" stroke="#e8e8e8"/>
<polyline points="663.9,395.3 663.5,398.7 663.1,402.0" stroke="#e0e0e0"/>
<polyline points="663.1,402.0 662.7,405.3" stroke="#d8d8d8"/>
<polyline points="662.7,405.3 662.4,408.6 662.0,411.9" stroke="#d0d0d0"/>
<polyline points="681.9,273.4 681.4,277.1 681.0,280.7 680.6,284.3" stroke="#d8d8d8"/>
<polyline points="680.6,284.3 680.2,287.8" stroke="#d0d0d0"/>
<polyline points="680.2,287.8 679.7,291.4 679.3,294.9 678.9,298.4 678.5,301.9 678.1,305.4 677.7,308.8 677.3,312.3 676.8,315.7 676.4,319.1 676.0,322.5 675.6,325.9" stroke="#909090"/>
<polyline points="652.7,197.7 652.4,201.4 652.1,205.0 651.7,208.6 651.4,212.2 651.1,215.8 650.7,219.4 650.4,222.9 650.1,226.5 649.8,230.0 649.5,233.5 649.1,236.9 648.8,240.4 648.5,243.8 648.2,247.3" stroke="#909090"/>
<polyline points="590.3,139.6 590.2,143.2 590.0,146.9 589.9,150.5" stroke="#787878"/>
<polyline points="589.9,150.5 589.7,154.1 589.5,157.7 589.4,161.2 589.2,164.8 589.0,168.3 588.9,171.8 588.7,175.3 588.6,178.8 588.4,182.3" stroke="#808080"/>
<polyline points="506.0,104.1 506.0,107.7 506.1,111.4 506.1,115.0 506.2,118.6 506.2,122.1 506.3,125.7 506.3,129.2" stroke="#303030"/>
<polyline points="506.3,129.2 506.3,132.7 506.4,136.2 506.4,139.7 506.5,143.2 506.5,146.7 506.6,150.1 506.6,153.5 506.6,156.9 506.7,160.3 506.7,163.7 506.8,167.0 506.8,170.4 506.8,173.7" stroke="#383838"/>
<polyline points="410.7,93.5 411.0,97.1 411.3,100.7 411.5,104.3 411.8,107.8 412.1,111.4 412.3,114.9 412.6,118.4 412.9,121.9 413.1,125.4 413.4,128.9 413.7,132.3 413.9,135.8 414.2,139.2 414.4,142.6 414.7,146.0 414.9,149.4 415.2,152.7 415.4,156.1 415.7,159.4 415.9,162.7 416.2,166.0 416.4,169.3 416.7,172.5 416.9,175.8" stroke="#181818"/>
<polyline points="314.9,107.8 315.4,111.4 315.9,115.0 316.4,118.6 316.9,122.1 317.4,125.7 317.9,129.2 318.4,132.7 318.9,136.1 319.4,139.6 319.8,143.1 320.3,146.5 320.8,149.9 321.3,153.3 321.8,156.7 322.2,160.0 322.7,163.4 323.2,166.7 323.6,170.1 324.1,173.4 324.5,176.7" stroke="#181818"/>
<polyline points="228.7,146.0 229.4,149.6 230.1,153.1 230.8,156.7 231.5,160.2 232.2,163.7 232.9,167.2 233.7,170.7 234.4,174.1 235.1,177.6" stroke="#181818"/>
<polyline points="162.2,205.0 163.1,208.6 164.0,212.1 165.0,215.6 165.9,219.1 166.8,222.6 167.7,226.0 168.5,229.5 169.4,232.9" stroke="#181818"/>
<polyline points="126.1,279.6 127.1,283.1 128.2,286.6 129.2,290.1 130.3,293.6 131.3,297.0 132.3,300.4 133.3,303.8 134.4,307.2 135.4,310.6" stroke="#181818"/>
<polyline points="129.6,361.0 130.7,364.4 131.8,367.9 132.9,371.3 134.0,374.7 135.1,378.1 136.1,381.5 137.2,384.8 138.2,388.2 139.3,391.5 140.3,394.8" stroke="#181818"/>
<polyline points="178.1,436.5 179.2,439.9" stroke="#383838"/>
<polyline points="179.2,439.9 180.2,443.2 181.2,446.6 182.1,449.9 183.1,453.3" stroke="#303030"/>
<polyline points="183.1,453.3 184.1,456.6 185.1,459.9 186.1,463.1 187.0,466.4" stroke="#282828"/>
<polyline points="187.0,466.4 188.0,469.6 188.9,472.8 189.9,476.0" stroke="#202020"/>
<polyline points="194.5,491.7 195.4,494.8 196.3,497.9 197.3,500.9 198.2,504.0 199.0,507.0 199.9,510.0 200.8,513.0" stroke="#181818"/>
<polyline points="268.6,490.9 269.4,494.2" stroke="#787878"/>
<polyline points="269.4,494.2 270.1,497.6 270.9,500.9 271.7,504.2" stroke="#707070"/>
<polyline points="271.7,504.2 272.4,507.5 273.2,510.7" stroke="#686868"/>
<polyline points="273.2,510.7 273.9,514.0 274.6,517.2 275.4,520.4" stroke="#606060"/>
<polyline points="275.4,520.4 276.1,523.6 276.8,526.7 277.5,529.9" stroke="#585858"/>
<polyline points="277.5,529.9 278.3,533.0 279.0,536.1 279.7,539.2" stroke="#505050"/>
<polyline points="279.7,539.2 280.4,542.3 281.1,545.3" stroke="#484848"/>
<polyline points="281.1,545.3 281.8,548.4 282.5,551.4 283.2,554.4" stroke="#404040"/>
<polyline points="283.2,554.4 283.9,557.4 284.5,560.3 285.2,563.3 285.9,566.2" stroke="#383838"/>
<polyline points="386.6,510.9 387.0,514.3" stroke="#c0c0c0"/>
<polyline points="387.0,514.3 387.4,517.6 387.9,520.9" stroke="#b8b8b8"/>
<polyline points="387.9,520.9 388.3,524.2 388.7,527.5 389.1,530.7" stroke="#b0b0b0"/>
<polyline points="389.1,530.7 389.5,534.0 389.9,537.2" stroke="#a8a8a8"/>
<polyline points="389.9,537.2 390.3,540.4 390.7,543.6" stroke="#a0a0a0"/>
<polyline points="390.7,543.6 391.1,546.7 391.5,549.8" stroke="#989898"/>
<polyline points="391.5,549.8 391.9,553.0 392.3,556.1 392.7,559.1" stroke="#909090"/>
<polyline points="392.7,559.1 393.0,562.2 393.4,565.2" stroke="#888888"/>
<polyline points="393.4,565.2 393.8,568.3 394.2,571.3" stroke="#808080"/>
<polyline points="394.2,571.3 394.6,574.3 394.9,577.2" stroke="#787878"/>
<polyline points="394.9,577.2 395.3,580.2 395.7,583.1" stroke="#707070"/>
<polyline points="395.7,583.1 396.0,586.1" stroke="#686868"/>
<polyline points="509.4,566.9 508.5,567.6 507.6,568.4" stroke="#989898"/>
<polyline points="507.6,568.4 506.7,569.1" stroke="#909090"/>
<polyline points="506.7,569.1 505.8,569.8 505.0,570.5" stroke="#888888"/>
<polyline points="505.0,570.5 504.1,571.1 503.2,571.8" stroke="#808080"/>
<polyline points="503.2,571.8 502.4,572.5 501.5,573.2" stroke="#787878"/>
<polyline points="501.5,573.2 500.7,573.8 499.8,574.5" stroke="#707070"/>
<polyline points="499.8,574.5 499.0,575.2 498.2,575.8" stroke="#686868"/>
<polyline points="498.2,575.8 497.3,576.5 496.5,577.1" stroke="#606060"/>
<polyline points="496.5,577.1 495.7,577.8 494.9,578.4 494.1,579.0 493.3,579.7 492.5,580.3 491.7,580.9 490.9,581.5" stroke="#202020"/>
<polyline points="490.9,581.5 490.1,582.1 489.4,582.8" stroke="#181818"/>
<polyline points="602.7,513.2 600.7,514.5 598.8,515.8" stroke="#b0b0b0"/>
<polyline points="598.8,515.8 596.8,517.1" stroke="#a8a8a8"/>
<polyline points="596.8,517.1 594.9,518.4 593.0,519.7" stroke="#a0a0a0"/>
<polyline points="593.0,519.7 591.1,521.0 589.2,522.3" stroke="#989898"/>
<polyline points="589.2,522.3 587.4,523.5" stroke="#909090"/>
<polyline points="587.4,523.5 585.5,524.8" stroke="#888888"/>
<polyline points="585.5,524.8 583.6,526.0" stroke="#707070"/>
<polyline points="583.6,526.0 581.8,527.2 580.0,528.5 578.2,529.7 576.4,530.9 574.6,532.1 572.8,533.3 571.0,534.5" stroke="#686868"/>
<polyline points="571.0,534.5 569.3,535.7 567.5,536.8 565.8,538.0 564.1,539.2 562.4,540.3" stroke="#606060"/>
<polyline points="562.4,540.3 560.7,541.5 559.0,542.6" stroke="#585858"/>
<polyline points="200.8,513.0 203.4,514.3 206.1,515.6 208.7,516.8 211.2,518.1 213.8,519.4 216.3,520.6 218.9,521.9 221.4,523.1 223.9,524.4 226.4,525.6 228.9,526.8 231.3,528.0 233.8,529.2 236.2,530.4 238.6,531.6 241.0,532.8 243.4,534.0 245.8,535.1 248.1,536.3 250.5,537.4 252.8,538.6 255.1,539.7 257.4,540.9 259.7,542.0" stroke="#181818"/>
<polyline points="285.9,566.2 287.6,566.9 289.3,567.6 291.0,568.3" stroke="#303030"/>
<polyline points="291.0,568.3 292.7,569.0 294.4,569.7 296.0,570.4 297.7,571.1" stroke="#282828"/>
<polyline points="297.7,571.1 299.3,571.8 300.9,572.5 302.5,573.1 304.2,573.8 305.7,574.5" stroke="#202020"/>
<polyline points="305.7,574.5 307.3,575.1 308.9,575.8 310.5,576.4 312.0,577.1 313.6,577.7 315.1,578.4 316.6,579.0 318.1,579.6 319.6,580.2 321.1,580.9 322.6,581.5 324.1,582.1" stroke="#181818"/>
<polyline points="396.0,586.1 396.5,586.6 396.9,587.0" stroke="#686868"/>
<polyline points="396.9,587.0 397.3,587.5 397.8,588.0" stroke="#606060"/>
<polyline points="397.8,588.0 398.2,588.5 398.6,589.0" stroke="#585858"/>
<polyline points="398.6,589.0 399.0,589.4 399.5,589.9 399.9,590.3" stroke="#505050"/>
<polyline points="399.9,590.3 400.3,590.8 400.7,591.3" stroke="#484848"/>
<polyline points="400.7,591.3 401.1,591.7 401.5,592.2 401.9,592.6" stroke="#404040"/>
<polyline points="401.9,592.6 402.3,593.1 402.7,593.5" stroke="#383838"/>
<polyline points="402.7,593.5 403.1,593.9 403.5,594.4 403.8,594.8 404.2,595.2 404.6,595.7 405.0,596.1 405.4,596.5 405.7,596.9" stroke="#181818"/>
<polyline points="489.4,582.8 487.9,581.2 486.4,579.6 485.0,578.0 483.6,576.5 482.1,575.0 480.7,573.4 479.3,571.9 477.9,570.4 476.5,568.9 475.1,567.4 473.7,565.9 472.4,564.5 471.0,563.0 469.6,561.5 468.3,560.1 467.0,558.7 465.6,557.2 464.3,555.8 463.0,554.4 461.7,553.0 460.4,551.6 459.1,550.3 457.9,548.9 456.6,547.5" stroke="#181818"/>
<polyline points="559.0,542.6 556.0,541.9 553.1,541.2 550.2,540.5" stroke="#585858"/>
<polyline points="550.2,540.5 547.3,539.9 544.4,539.2 541.6,538.5 538.8,537.8" stroke="#505050"/>
<polyline points="538.8,537.8 535.9,537.2 533.1,536.5 530.3,535.9 527.6,535.2" stroke="#484848"/>
<polyline points="527.6,535.2 524.8,534.5 522.1,533.9 519.3,533.3" stroke="#404040"/>
<polyline points="519.3,533.3 516.6,532.6 513.9,532.0 511.3,531.4 508.6,530.7" stroke="#383838"/>
<polyline points="508.6,530.7 505.9,530.1 503.3,529.5 500.7,528.9" stroke="#303030"/>
<polyline points="500.7,528.9 498.1,528.3 495.5,527.6 492.9,527.0" stroke="#282828"/>
<polyline points="551.2,492.2 547.7,492.7" stroke="#606060"/>
<polyline points="547.7,492.7 544.2,493.2 540.7,493.7" stroke="#585858"/>
<polyline points="540.7,493.7 537.2,494.2 533.8,494.7" stroke="#505050"/>
<polyline points="533.8,494.7 530.3,495.1 526.9,495.6 523.5,496.1" stroke="#484848"/>
<polyline points="523.5,496.1 520.1,496.6 516.7,497.0" stroke="#404040"/>
<polyline points="278.5,492.3 282.4,492.8 286.3,493.3 290.1,493.8 293.9,494.3 297.7,494.7 301.5,495.2 305.3,495.7 309.0,496.2 312.8,496.6 316.5,497.1" stroke="#181818"/>
<polyline points="259.7,542.0 263.1,541.3 266.5,540.7 269.9,540.0 273.3,539.3 276.7,538.7 280.0,538.0 283.3,537.4 286.7,536.7 289.9,536.1 293.2,535.5 296.5,534.8 299.7,534.2 302.9,533.6 306.1,532.9 309.3,532.3 312.5,531.7 315.7,531.1 318.8,530.5 321.9,529.8 325.0,529.2 328.1,528.6 331.2,528.0 334.3,527.4 337.3,526.8" stroke="#181818"/>
<polyline points="324.1,582.1 326.2,580.5 328.3,579.0 330.4,577.5 332.5,575.9 334.5,574.4 336.6,572.9 338.6,571.4 340.7,569.9 342.7,568.5 344.7,567.0 346.7,565.5 348.7,564.1 350.6,562.6 352.6,561.2 354.5,559.8 356.5,558.4 358.4,557.0 360.3,555.6 362.2,554.2 364.1,552.8 365.9,551.4 367.8,550.0 369.7,548.7 371.5,547.3" stroke="#181818"/>
<polyline points="405.7,596.9 406.1,595.0 406.4,593.1 406.8,591.3 407.1,589.4 407.5,587.6 407.8,585.7 408.2,583.9 408.5,582.1 408.8,580.3 409.2,578.5 409.5,576.7 409.8,575.0 410.2,573.2 410.5,571.5 410.8,569.8 411.1,568.1 411.5,566.4 411.8,564.7 412.1,563.0 412.4,561.3 412.7,559.6 413.0,558.0 413.3,556.4 413.6,554.7" stroke="#181818"/>
<polyline points="456.6,547.5 454.9,544.4 453.3,541.3 451.6,538.2 450.0,535.2 448.4,532.1 446.7,529.1 445.1,526.1 443.5,523.1 441.9,520.1 440.3,517.1 438.7,514.1 437.2,511.2 435.6,508.3 434.0,505.4 432.5,502.5 430.9,499.6 429.4,496.7 427.9,493.8 426.4,491.0" stroke="#181818"/>
<polyline points="492.9,527.0 489.7,524.8 486.5,522.7 483.3,520.5" stroke="#202020"/>
<polyline points="483.3,520.5 480.1,518.3 476.9,516.2 473.7,514.0 470.6,511.9 467.4,509.8 464.3,507.7 461.2,505.6 458.1,503.5 455.0,501.4 451.9,499.3 448.8,497.2 445.8,495.2 442.7,493.1" stroke="#181818"/>
<polyline points="516.7,497.0 512.5,496.2 508.3,495.3" stroke="#383838"/>
<polyline points="508.3,495.3 504.1,494.5 499.9,493.6 495.7,492.7" stroke="#303030"/>
<polyline points="495.7,492.7 491.6,491.9" stroke="#282828"/>
<polyline points="316.5,497.1 320.9,496.2 325.3,495.4 329.6,494.5 333.9,493.7 338.3,492.8 342.6,492.0" stroke="#181818"/>
<polyline points="337.3,526.8 340.9,524.7 344.4,522.5 347.9,520.4 351.4,518.2 354.9,516.1 358.4,514.0 361.8,511.9 365.3,509.7 368.7,507.6 372.1,505.5 375.6,503.5 379.0,501.4 382.3,499.3 385.7,497.2 389.1,495.2 392.4,493.1" stroke="#181818"/>
<polyline points="371.5,547.3 373.6,544.2 375.6,541.2 377.7,538.1 379.8,535.1 381.8,532.0 383.8,529.0 385.9,526.0 387.9,523.0 389.9,520.0 391.9,517.1 393.8,514.1 395.8,511.2 397.8,508.3 399.8,505.4 401.7,502.5 403.6,499.6 405.6,496.7 407.5,493.8 409.4,491.0" stroke="#181818"/>
<polyline points="413.6,554.7 413.9,551.3 414.1,547.9 414.3,544.5 414.6,541.1 414.8,537.7 415.0,534.4 415.2,531.1 415.5,527.7 415.7,524.5 415.9,521.2 416.1,517.9 416.3,514.7 416.5,511.4 416.8,508.2 417.0,505.0 417.2,501.8 417.4,498.7 417.6,495.5 417.8,492.4" stroke="#181818"/>
</g>
</svg>
<div id="panel"></div><div style="position:absolute;left:0;top:0;width:1px;height:613px;background:#f0f0f0"></div>
<div style="position:absolute;left:806px;top:24px;width:1px;height:589px;background:#a8a8a8"></div><div style="position:absolute;left:808px;top:34px;width:1px;height:579px;background:#f0f0f0"></div><div style="position:absolute;left:808px;top:25px;width:1px;height:8px;background:#f4f4f4"></div><div style="position:absolute;left:807px;top:33px;width:3px;height:1px;background:#a8a8a8"></div><div style="position:absolute;left:810px;top:25px;width:1px;height:9px;background:#a8a8a8"></div>
<div class="mb" style="left:815px;top:30px"></div>
<svg class="ar" style="left:815px;top:30px" width="17" height="12"><path d="M5.5 6h6M8.5 3v6" stroke="#333" stroke-width="1.6"/></svg>
<div class="b" style="left:863px;top:28px;width:68px;height:21px"></div>
<div class="t" style="left:863px;top:31.2px;width:68px;text-align:center">HOMO</div>
<div class="b" style="left:931px;top:28px;width:69px;height:21px"></div>
<div class="t" style="left:931px;top:31.2px;width:69px;text-align:center">LUMO</div>
<div class="b" style="left:1000px;top:28px;width:69px;height:21px"></div>
<div class="t" style="left:1000px;top:31.2px;width:69px;text-align:center">Density</div>
<div class="b" style="left:1069px;top:28px;width:75px;height:21px"></div>
<div class="t" style="left:1069px;top:31.2px;width:75px;text-align:center;color:#a3a3a3">Spin Density</div>
<div class="b" style="left:1144px;top:28px;width:105px;height:21px"></div>
<div class="t" style="left:1144px;top:31.2px;width:105px;text-align:center">Coulomb Potential</div>
<div class="mb" style="left:815px;top:59px"></div>
<svg class="ar" style="left:815px;top:59px" width="17" height="12"><path d="M6 6.5h5" stroke="#444" stroke-width="1.4"/></svg>
<div class="t " style="left:816.0px;top:74.0px">C-1</div>
<div class="t " style="left:849.0px;top:61.0px">Field: Calculated</div>
<div class="e" style="left:848px;top:80px;width:176px;height:17px"></div>
<div class="t" style="left:850.0px;top:81.6px">Density SCF</div>
<div class="e" style="left:1024px;top:80px;width:49px;height:17px"></div>
<div class="t" style="left:1026.0px;top:81.6px">-</div>
<div class="e" style="left:1073px;top:80px;width:175px;height:17px"></div>
<div class="t" style="left:1075.0px;top:81.6px">Density Sum Frag</div>
<div class="mb" style="left:815px;top:107px"></div>
<svg class="ar" style="left:815px;top:107px" width="17" height="12"><path d="M6 6.5h5" stroke="#444" stroke-width="1.4"/></svg>
<svg class="ar" style="left:838px;top:112px" width="8" height="6"><path d="M0.8 1h5.4l-2.7 3z" fill="#2a2a2a"/></svg>
<div class="t " style="left:849.5px;top:109.0px">Isosurface: Multiple</div>
<div class="cb" style="left:1005px;top:112px"></div>
<div class="t " style="left:1015.0px;top:108.8px">Wireframe</div>
<div class="cbk" style="left:1078px;top:112px"></div>
<div class="t " style="left:1087.5px;top:108.8px">Show</div>
<div class="e" style="left:848px;top:127px;width:175px;height:17px"></div>
<div class="t" style="left:850.0px;top:128.9px">C-1</div>
<div class="cb" style="left:1033px;top:132px"></div>
<div class="t " style="left:1043.3px;top:128.8px">Log</div>
<div class="cb" style="left:1085px;top:132px"></div>
<div class="t " style="left:1094.8px;top:128.8px">Bar</div>
<div class="t " style="left:849.5px;top:149.0px">Min:</div>
<div class="e" style="left:874px;top:147px;width:44px;height:17px"></div>
<div class="t" style="left:876.0px;top:149.0px">-0.01</div>
<div class="t " style="left:922.8px;top:149.0px">Max:</div>
<div class="e" style="left:950px;top:147px;width:44px;height:17px"></div>
<div class="t" style="left:952.0px;top:149.0px">0.01</div>
<div class="t " style="left:998.4px;top:149.0px">N:</div>
<div class="e" style="left:1012px;top:147px;width:24px;height:17px"></div>
<div class="t" style="left:1014.0px;top:149.0px">7</div>
<div class="e" style="left:1042px;top:147px;width:81px;height:17px"></div>
<div class="t" style="left:1044.0px;top:149.0px">Clipping Plane</div>
<div class="t " style="left:849.5px;top:171.7px">Opacity:</div>
<div class="e" style="left:901px;top:170px;width:36px;height:16px"></div>
<div class="t" style="left:903.0px;top:171.7px">100</div>
<svg class="ar" style="left:931px;top:172px" width="7" height="12"><path d="M0.5 5V0.5H5.5M0.5 11V6.5H5.5" stroke="#f8f8f8" fill="none"/><path d="M5.5 0.5V5.5H0.5M5.5 6V11.5H0.5" stroke="#a0a0a0" fill="none"/><path d="M1.2 4.3h3.6L3 2.3z M1.2 7.6h3.6L3 9.6z" fill="#111"/></svg>
<div class="t " style="left:941.0px;top:171.7px">Ambient:</div>
<div class="e" style="left:989px;top:170px;width:36px;height:16px"></div>
<div class="t" style="left:991.0px;top:171.7px">1</div>
<svg class="ar" style="left:1019px;top:172px" width="7" height="12"><path d="M0.5 5V0.5H5.5M0.5 11V6.5H5.5" stroke="#f8f8f8" fill="none"/><path d="M5.5 0.5V5.5H0.5M5.5 6V11.5H0.5" stroke="#a0a0a0" fill="none"/><path d="M1.2 4.3h3.6L3 2.3z M1.2 7.6h3.6L3 9.6z" fill="#111"/></svg>
<div class="t " style="left:1029.7px;top:171.7px">Diffuse:</div>
<div class="e" style="left:1070px;top:170px;width:37px;height:16px"></div>
<div class="t" style="left:1072.0px;top:171.7px">70</div>
<svg class="ar" style="left:1101px;top:172px" width="7" height="12"><path d="M0.5 5V0.5H5.5M0.5 11V6.5H5.5" stroke="#f8f8f8" fill="none"/><path d="M5.5 0.5V5.5H0.5M5.5 6V11.5H0.5" stroke="#a0a0a0" fill="none"/><path d="M1.2 4.3h3.6L3 2.3z M1.2 7.6h3.6L3 9.6z" fill="#111"/></svg>
<div class="t " style="left:849.5px;top:186.6px">Specular:</div>
<div class="e" style="left:901px;top:186px;width:36px;height:16px"></div>
<div class="t" style="left:903.0px;top:186.6px">50</div>
<svg class="ar" style="left:931px;top:188px" width="7" height="12"><path d="M0.5 5V0.5H5.5M0.5 11V6.5H5.5" stroke="#f8f8f8" fill="none"/><path d="M5.5 0.5V5.5H0.5M5.5 6V11.5H0.5" stroke="#a0a0a0" fill="none"/><path d="M1.2 4.3h3.6L3 2.3z M1.2 7.6h3.6L3 9.6z" fill="#111"/></svg>
<div class="t " style="left:941.0px;top:186.6px">Power:</div>
<div class="e" style="left:989px;top:186px;width:36px;height:16px"></div>
<div class="t" style="left:991.0px;top:186.6px">70</div>
<svg class="ar" style="left:1019px;top:188px" width="7" height="12"><path d="M0.5 5V0.5H5.5M0.5 11V6.5H5.5" stroke="#f8f8f8" fill="none"/><path d="M5.5 0.5V5.5H0.5M5.5 6V11.5H0.5" stroke="#a0a0a0" fill="none"/><path d="M1.2 4.3h3.6L3 2.3z M1.2 7.6h3.6L3 9.6z" fill="#111"/></svg>
<div class="t " style="left:849.5px;top:212.0px">Color map:</div>
<div class="e" style="left:912px;top:208px;width:112px;height:20px"></div>
<div class="t" style="left:914.0px;top:212.0px">Diverging</div>
<div class="b" style="left:1132px;top:208px;width:92px;height:21px"></div>
<div class="t" style="left:1132px;top:212.0px;width:92px;text-align:center">Switch Min/Max</div>
<div class="t " style="left:849.5px;top:231.0px">Hue:</div>
<div class="e" style="left:875px;top:229px;width:36px;height:16px"></div>
<div class="t" style="left:877.0px;top:231.0px">0</div>
<svg class="ar" style="left:905px;top:231px" width="7" height="12"><path d="M0.5 5V0.5H5.5M0.5 11V6.5H5.5" stroke="#f8f8f8" fill="none"/><path d="M5.5 0.5V5.5H0.5M5.5 6V11.5H0.5" stroke="#a0a0a0" fill="none"/><path d="M1.2 4.3h3.6L3 2.3z M1.2 7.6h3.6L3 9.6z" fill="#111"/></svg>
<div class="e" style="left:911px;top:229px;width:37px;height:16px"></div>
<div class="t" style="left:913.0px;top:231.0px">65</div>
<svg class="ar" style="left:942px;top:231px" width="7" height="12"><path d="M0.5 5V0.5H5.5M0.5 11V6.5H5.5" stroke="#f8f8f8" fill="none"/><path d="M5.5 0.5V5.5H0.5M5.5 6V11.5H0.5" stroke="#a0a0a0" fill="none"/><path d="M1.2 4.3h3.6L3 2.3z M1.2 7.6h3.6L3 9.6z" fill="#111"/></svg>
<div class="t " style="left:957.0px;top:231.0px">Saturation:</div>
<div class="e" style="left:1024px;top:229px;width:37px;height:16px"></div>
<div class="t" style="left:1026.0px;top:231.0px">100</div>
<svg class="ar" style="left:1055px;top:231px" width="7" height="12"><path d="M0.5 5V0.5H5.5M0.5 11V6.5H5.5" stroke="#f8f8f8" fill="none"/><path d="M5.5 0.5V5.5H0.5M5.5 6V11.5H0.5" stroke="#a0a0a0" fill="none"/><path d="M1.2 4.3h3.6L3 2.3z M1.2 7.6h3.6L3 9.6z" fill="#111"/></svg>
<div class="e" style="left:1061px;top:229px;width:36px;height:16px"></div>
<div class="t" style="left:1063.0px;top:231.0px">100</div>
<svg class="ar" style="left:1091px;top:231px" width="7" height="12"><path d="M0.5 5V0.5H5.5M0.5 11V6.5H5.5" stroke="#f8f8f8" fill="none"/><path d="M5.5 0.5V5.5H0.5M5.5 6V11.5H0.5" stroke="#a0a0a0" fill="none"/><path d="M1.2 4.3h3.6L3 2.3z M1.2 7.6h3.6L3 9.6z" fill="#111"/></svg>
<div class="t " style="left:1097.4px;top:231.0px">Value:</div>
<div class="e" style="left:1132px;top:229px;width:37px;height:16px"></div>
<div class="t" style="left:1134.0px;top:231.0px">99</div>
<svg class="ar" style="left:1163px;top:231px" width="7" height="12"><path d="M0.5 5V0.5H5.5M0.5 11V6.5H5.5" stroke="#f8f8f8" fill="none"/><path d="M5.5 0.5V5.5H0.5M5.5 6V11.5H0.5" stroke="#a0a0a0" fill="none"/><path d="M1.2 4.3h3.6L3 2.3z M1.2 7.6h3.6L3 9.6z" fill="#111"/></svg>
<div class="e" style="left:1178px;top:229px;width:36px;height:16px"></div>
<div class="t" style="left:1180.0px;top:231.0px">99</div>
<svg class="ar" style="left:1208px;top:231px" width="7" height="12"><path d="M0.5 5V0.5H5.5M0.5 11V6.5H5.5" stroke="#f8f8f8" fill="none"/><path d="M5.5 0.5V5.5H0.5M5.5 6V11.5H0.5" stroke="#a0a0a0" fill="none"/><path d="M1.2 4.3h3.6L3 2.3z M1.2 7.6h3.6L3 9.6z" fill="#111"/></svg>
<div class="cbk" style="left:852px;top:257px"></div>
<div class="t " style="left:862.0px;top:252.7px">Use Clip Plane</div>
<div class="cb" style="left:950px;top:257px"></div>
<div class="t " style="left:960.0px;top:252.7px">Interactive Plane</div>
<div class="b" style="left:848px;top:269px;width:69px;height:21px"></div>
<div class="t" style="left:848px;top:271.6px;width:69px;text-align:center">Use Atoms</div>
<div class="b" style="left:920px;top:269px;width:28px;height:21px"></div>
<div class="t" style="left:920px;top:271.6px;width:28px;text-align:center">XY</div>
<div class="b" style="left:948px;top:269px;width:27px;height:21px"></div>
<div class="t" style="left:948px;top:271.6px;width:27px;text-align:center">XZ</div>
<div class="b" style="left:975px;top:269px;width:28px;height:21px"></div>
<div class="t" style="left:975px;top:271.6px;width:28px;text-align:center">YZ</div>
<div class="b" style="left:1007px;top:269px;width:67px;height:21px"></div>
<div class="t" style="left:1007px;top:271.6px;width:67px;text-align:center">Flip Plane</div>
<div class="b" style="left:848px;top:296px;width:130px;height:21px"></div>
<div class="t" style="left:848px;top:300.0px;width:130px;text-align:center">Export VTK PolyData...</div>
<div class="b" style="left:1156px;top:296px;width:134px;height:21px"></div>
<div class="t" style="left:1159.0px;top:300.0px">Copy to all geometries</div>
<div class="mb" style="left:815px;top:324px"></div>
<svg class="ar" style="left:815px;top:324px" width="17" height="12"><path d="M6 6.5h5" stroke="#444" stroke-width="1.4"/></svg>
<svg class="ar" style="left:839px;top:327px" width="6" height="8"><path d="M1 0v5.2l3.2-2.6z" fill="#2a2a2a"/></svg>
<div class="t " style="left:849.5px;top:326.0px">Plane: Colored</div>
<div class="cb" style="left:1159px;top:329px"></div>
<div class="t " style="left:1169.0px;top:326.0px">Wireframe</div>
<div class="cbk" style="left:1233px;top:329px"></div>
<div class="t " style="left:1241.5px;top:326.0px">Show</div>
<div class="e" style="left:848px;top:344px;width:175px;height:17px;background:#fefee0"></div>
<div class="t" style="left:850.0px;top:346.0px">C-1</div>
<div class="e" style="left:1032px;top:344px;width:51px;height:17px"></div>
<div class="t" style="left:1034.0px;top:346.0px">-0.01</div>
<div class="e" style="left:1083px;top:344px;width:51px;height:17px"></div>
<div class="t" style="left:1085.0px;top:346.0px">0.01</div>
<div class="cb" style="left:1187px;top:349px"></div>
<div class="t " style="left:1197.0px;top:346.0px">Log</div>
<div class="cb" style="left:1239px;top:349px"></div>
<div class="t " style="left:1248.5px;top:346.0px">Bar</div>
<div style="position:absolute;left:849px;top:368px;width:434px;height:93px;background:#f5f5f5;border-left:1px solid #a0a0a0;border-top:1px solid #a0a0a0;box-sizing:border-box"></div>
<div style="position:absolute;left:850px;top:369px;width:433px;height:17px;background:#d9d9d9;border-bottom:1px solid #b8b8b8;box-sizing:border-box"></div>
<div style="position:absolute;left:882px;top:369px;width:1px;height:17px;background:#a8a8a8"></div>
<div style="position:absolute;left:850px;top:386px;width:33px;height:15px;background:#88f088"></div>
<div class="t " style="left:856.0px;top:386.0px">C-1</div>
<div class="t " style="left:849.5px;top:472.0px">Normal to plane (Å):</div>
<div class="e" style="left:963px;top:468px;width:58px;height:21px"></div>
<div class="t" style="left:963px;width:56px;top:472.0px;text-align:right">-0.0</div>
<div class="e" style="left:1027px;top:468px;width:57px;height:21px"></div>
<div class="t" style="left:1027px;width:55px;top:472.0px;text-align:right">0.0</div>
<div class="e" style="left:1090px;top:468px;width:58px;height:21px"></div>
<div class="t" style="left:1090px;width:56px;top:472.0px;text-align:right">-1.0</div>
<div class="b" style="left:1155px;top:468px;width:81px;height:22px"></div>
<div class="t" style="left:1155px;top:472.0px;width:81px;text-align:center">Use Selection</div>
<div class="t " style="left:849.5px;top:493.0px">Point on plane (Å):</div>
<div class="e" style="left:963px;top:489px;width:58px;height:22px"></div>
<div class="t" style="left:963px;width:56px;top:493.0px;text-align:right">-7.401486</div>
<div class="e" style="left:1027px;top:489px;width:57px;height:22px"></div>
<div class="t" style="left:1027px;width:55px;top:493.0px;text-align:right">-1.850371</div>
<div class="e" style="left:1090px;top:489px;width:58px;height:22px"></div>
<div class="t" style="left:1090px;width:56px;top:493.0px;text-align:right">0.0</div>
<div class="b" style="left:1155px;top:490px;width:81px;height:21px"></div>
<div class="t" style="left:1155px;top:493.0px;width:81px;text-align:center">Use Selection</div>
<div class="t " style="left:849.5px;top:515.0px">Interactive controls:</div>
<div class="cb" style="left:963px;top:519px"></div>
<div class="mb" style="left:815px;top:541px"></div>
<svg class="ar" style="left:815px;top:541px" width="17" height="12"><path d="M6 6.5h5" stroke="#444" stroke-width="1.4"/></svg>
<div class="t " style="left:849.5px;top:543.0px">Lights</div>
<div class="cbk" style="left:926px;top:546px"></div>
<div class="t " style="left:935.5px;top:543.0px">Enable</div>
<div class="t " style="left:849.5px;top:562.5px">Scene Light:</div>
<div class="e" style="left:925px;top:561px;width:50px;height:16px"></div>
<div class="t" style="left:927.0px;top:562.5px">78</div>
<svg class="ar" style="left:969px;top:563px" width="7" height="12"><path d="M0.5 5V0.5H5.5M0.5 11V6.5H5.5" stroke="#f8f8f8" fill="none"/><path d="M5.5 0.5V5.5H0.5M5.5 6V11.5H0.5" stroke="#a0a0a0" fill="none"/><path d="M1.2 4.3h3.6L3 2.3z M1.2 7.6h3.6L3 9.6z" fill="#111"/></svg>
<div class="cbk" style="left:988px;top:566px"></div>
<div class="t " style="left:997.7px;top:562.5px">Position light</div>
<div class="t " style="left:849.5px;top:582.5px">Camera Light:</div>
<div class="e" style="left:925px;top:581px;width:50px;height:16px"></div>
<div class="t" style="left:927.0px;top:582.5px">51</div>
<svg class="ar" style="left:969px;top:583px" width="7" height="12"><path d="M0.5 5V0.5H5.5M0.5 11V6.5H5.5" stroke="#f8f8f8" fill="none"/><path d="M5.5 0.5V5.5H0.5M5.5 6V11.5H0.5" stroke="#a0a0a0" fill="none"/><path d="M1.2 4.3h3.6L3 2.3z M1.2 7.6h3.6L3 9.6z" fill="#111"/></svg>
</body></html>
